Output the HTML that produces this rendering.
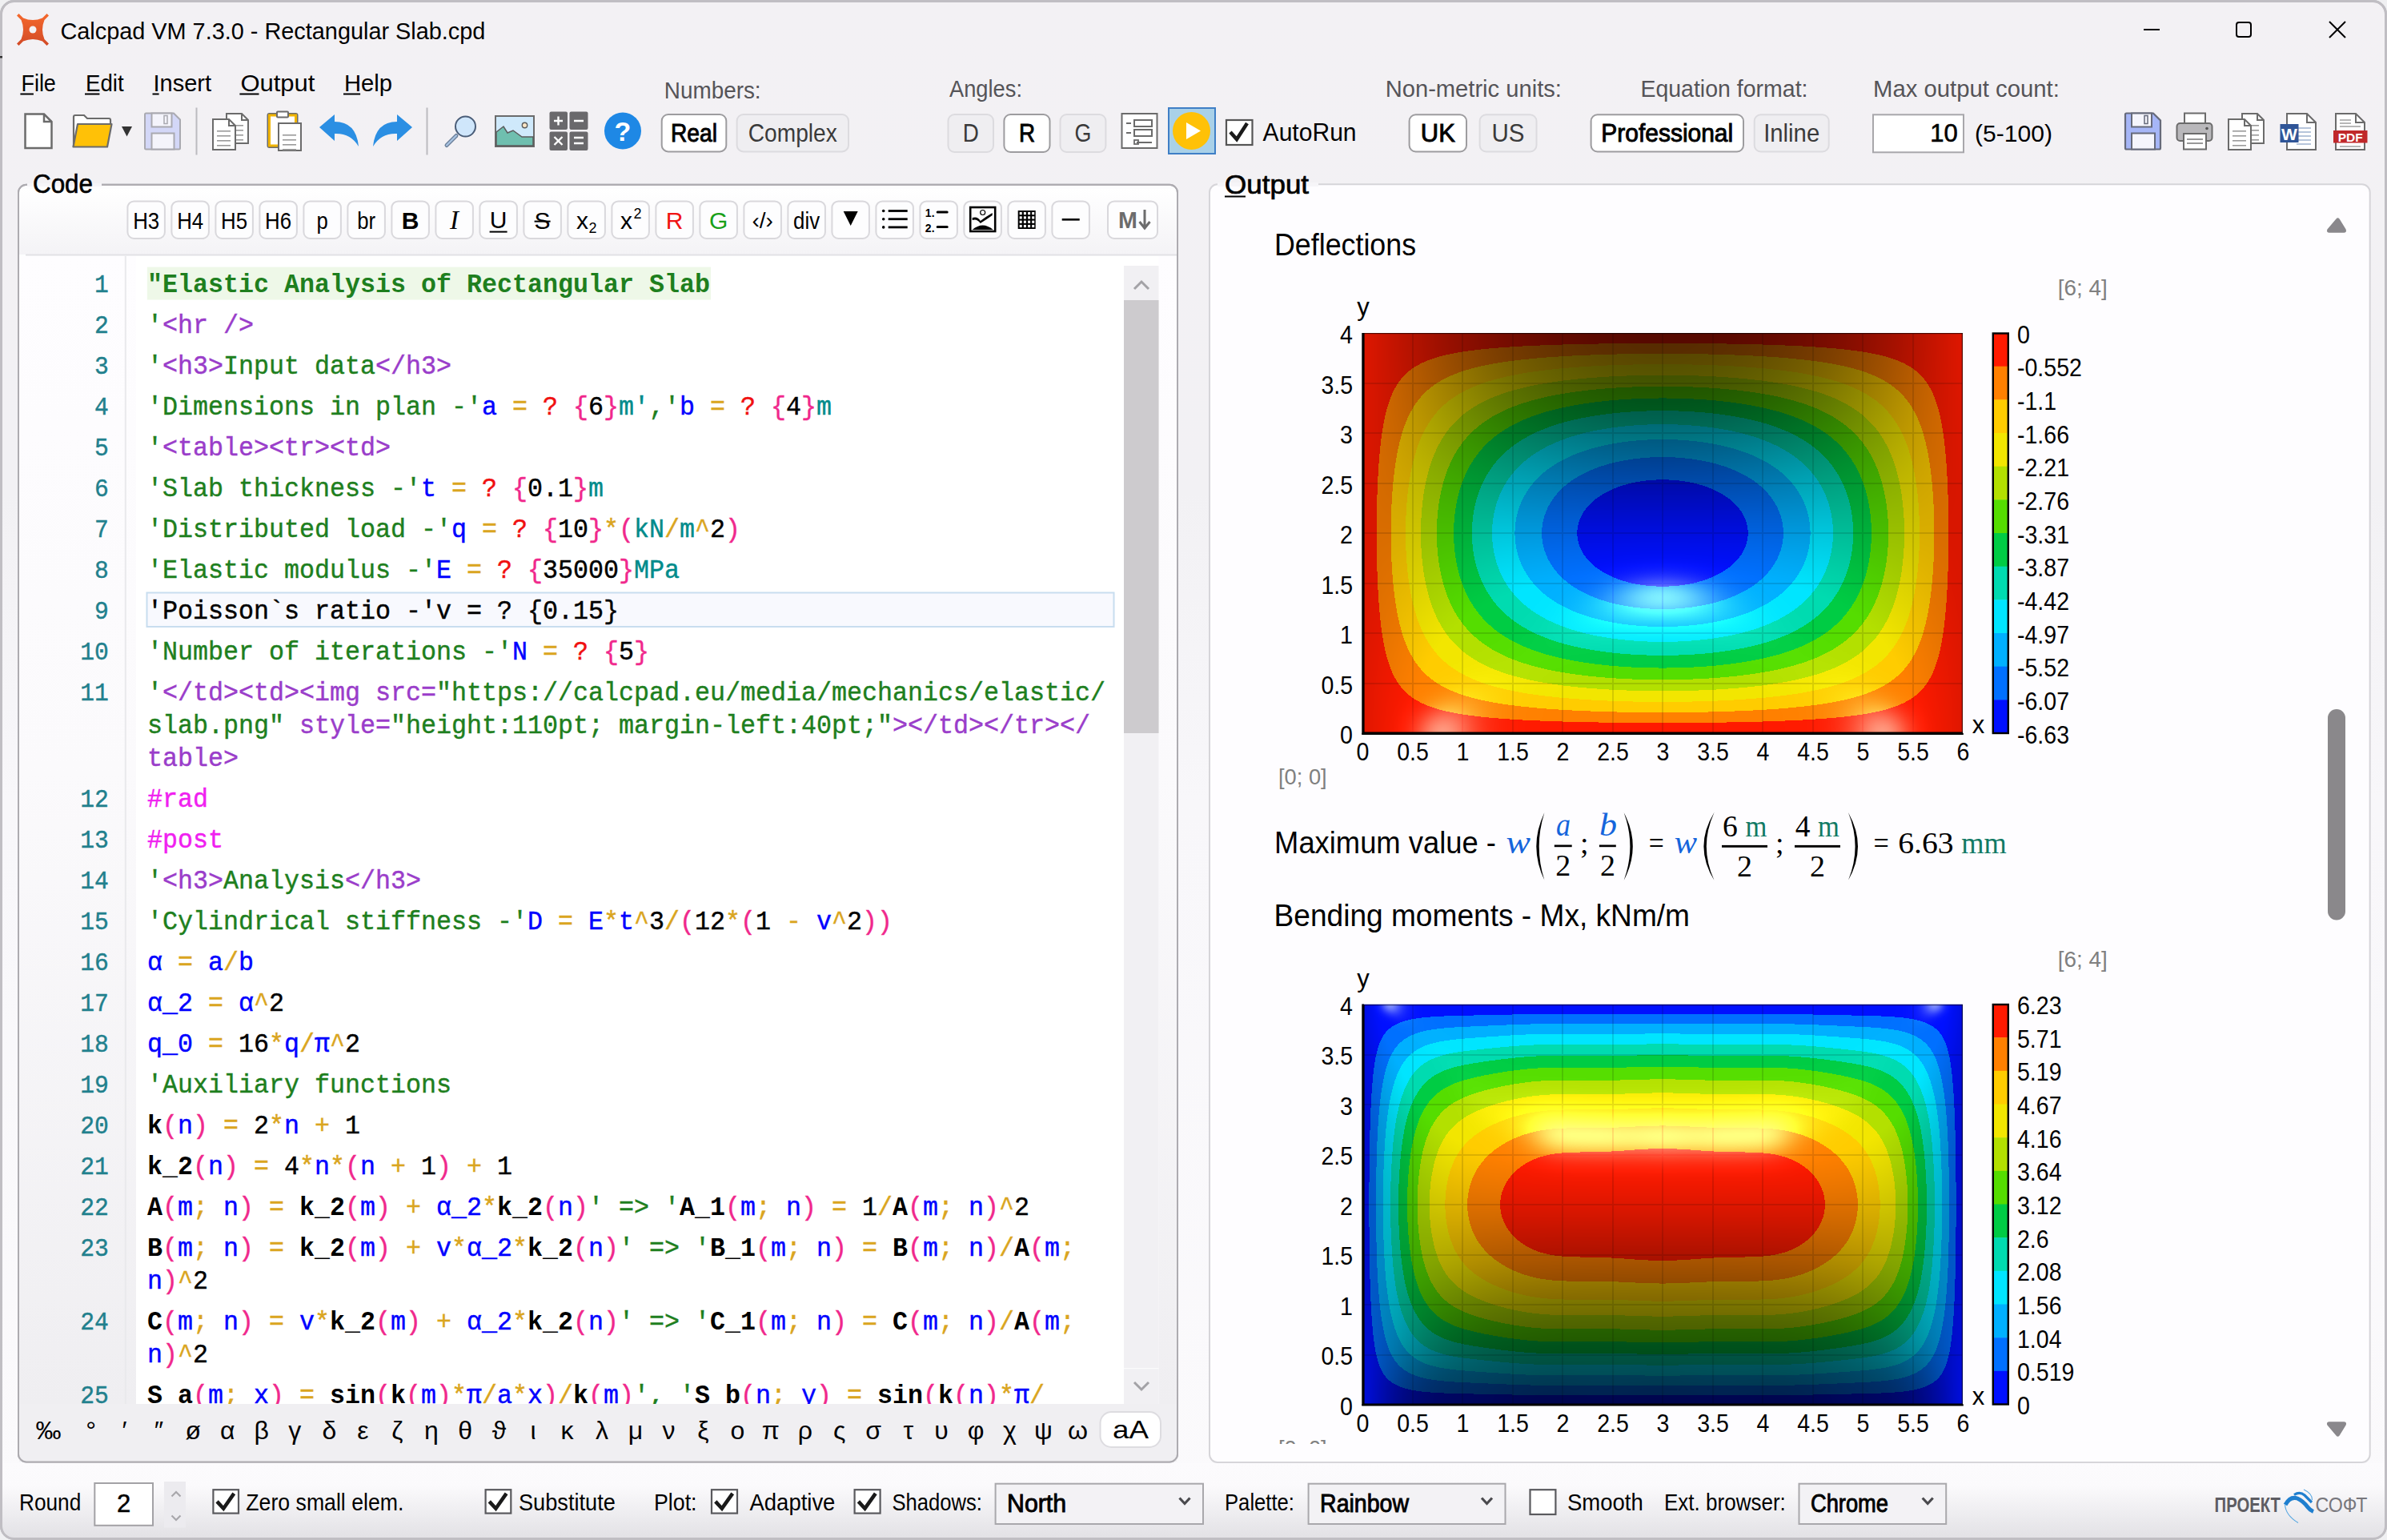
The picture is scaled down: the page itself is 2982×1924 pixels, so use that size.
<!DOCTYPE html><html><head><meta charset="utf-8"><title>Calcpad VM 7.3.0 - Rectangular Slab.cpd</title>
<style>html,body{margin:0;padding:0;background:#f0f0f2;overflow:hidden;width:2982px;height:1924px}svg{display:block;font-family:"Liberation Sans",sans-serif}text{white-space:pre}</style></head><body>
<svg width="2982" height="1924" viewBox="0 0 2982 1924">
<defs><linearGradient id="gStatus" x1="0" y1="0" x2="0" y2="1"><stop offset="0" stop-color="#fcfbfd"/><stop offset="0.3" stop-color="#fbfafc"/><stop offset="1" stop-color="#e2e1e5"/></linearGradient><linearGradient id="gCodeTb" x1="0" y1="0" x2="0" y2="1"><stop offset="0" stop-color="#ffffff"/><stop offset="1" stop-color="#f4f3f6"/></linearGradient><clipPath id="clipWin"><rect x="1" y="1" width="2980" height="1922" rx="16"/></clipPath><clipPath id="clipEditor"><rect x="24" y="320" width="1380" height="1434"/></clipPath><clipPath id="clipOut"><rect x="1513" y="232" width="1446" height="1572"/></clipPath></defs>
<defs><linearGradient id="gWin" gradientUnits="userSpaceOnUse" x1="0" y1="0" x2="0" y2="1924"><stop offset="0" stop-color="#f3f1f4"/><stop offset="0.32" stop-color="#f2f1f4"/><stop offset="0.52" stop-color="#f8f7fa"/><stop offset="1" stop-color="#fbfafc"/></linearGradient></defs>
<rect x="1.5" y="1.5" width="2979" height="1921" rx="16" fill="url(#gWin)" stroke="#c0bec3" stroke-width="3"/>
<rect x="0" y="70" width="3" height="2.5" fill="#333"/>
<g clip-path="url(#clipWin)">
<rect x="2" y="1828" width="2978" height="94" fill="url(#gStatus)"/>
<defs><linearGradient id="gSplit" x1="0" y1="0" x2="1" y2="0"><stop offset="0" stop-color="#f3f1f4"/><stop offset="0.5" stop-color="#f6f5f8"/><stop offset="1" stop-color="#f3f1f4"/></linearGradient></defs>
<rect x="1472" y="232" width="38" height="1596" fill="url(#gWin)"/>
<defs><linearGradient id="gIco" x1="0" y1="0" x2="0" y2="1"><stop offset="0" stop-color="#f5692d"/><stop offset="1" stop-color="#d24a26"/></linearGradient></defs>
<g transform="translate(41,37)"><path d="M-20,-17.5 L-17.5,-20 L-12,-14.5 Q0,-9.5 12,-14.5 L17.5,-20 L20,-17.5 L14.5,-12 Q9.5,0 14.5,12 L20,17.5 L17.5,20 L12,14.5 Q0,9.5 -12,14.5 L-17.5,20 L-20,17.5 L-14.5,12 Q-9.5,0 -14.5,-12 Z" fill="url(#gIco)"/><circle cx="0" cy="0" r="4.5" fill="#f3f1f4"/></g>
<text x="75.4" y="48.7" font-size="30" fill="#000" textLength="531.0" lengthAdjust="spacingAndGlyphs">Calcpad VM 7.3.0 - Rectangular Slab.cpd</text>
<path d="M2678,37 H2698" stroke="#000" stroke-width="2"/>
<rect x="2794" y="28" width="18" height="18" rx="3" fill="none" stroke="#000" stroke-width="2"/>
<path d="M2910,27 L2930,47 M2930,27 L2910,47" stroke="#000" stroke-width="2"/>
<text x="26.4" y="113.6" font-size="29" fill="#000" textLength="43.5" lengthAdjust="spacingAndGlyphs">File</text>
<rect x="25.4" y="116.5" width="16.5" height="2" fill="#000"/>
<text x="107.0" y="113.6" font-size="29" fill="#000" textLength="47.6" lengthAdjust="spacingAndGlyphs">Edit</text>
<rect x="106.0" y="116.5" width="18.4" height="2" fill="#000"/>
<text x="191.5" y="113.6" font-size="29" fill="#000" textLength="72.5" lengthAdjust="spacingAndGlyphs">Insert</text>
<rect x="190.5" y="116.5" width="8.1" height="2" fill="#000"/>
<text x="300.4" y="113.6" font-size="29" fill="#000" textLength="93.1" lengthAdjust="spacingAndGlyphs">Output</text>
<rect x="299.4" y="116.5" width="24.1" height="2" fill="#000"/>
<text x="430.0" y="113.6" font-size="29" fill="#000" textLength="60.1" lengthAdjust="spacingAndGlyphs">Help</text>
<rect x="429.0" y="116.5" width="21.1" height="2" fill="#000"/>
<path d="M31.5,142.5 H55 L64.5,152 V185 H31.5 Z" fill="#fff" stroke="#6b6b6b" stroke-width="2.5" stroke-linejoin="miter"/><path d="M55,142.5 V152 H64.5" fill="none" stroke="#6b6b6b" stroke-width="2.5"/>
<path d="M92,184 V146 Q92,144 94,144 H105 L109,148 H136 Q138,148 138,150 V156" fill="#fff" stroke="#6b6b6b" stroke-width="2.2"/><path d="M97,155 H139.5 L134,183.5 H91.5 Z" fill="#ffc107" stroke="#6b6b6b" stroke-width="2.2" stroke-linejoin="round"/>
<path d="M152,158 H165 L158.5,170.5 Z" fill="#333"/>
<path d="M181,143 Q181,141.5 182.5,141.5 H217 L225,149.5 V185 Q225,186.5 223.5,186.5 H182.5 Q181,186.5 181,185 Z" fill="#d3d7f7" stroke="#a9a9b0" stroke-width="2"/><rect x="189.5" y="141.5" width="25" height="17" fill="#f4f4fb" stroke="#a9a9b0" stroke-width="2"/><rect x="205" y="144.5" width="4" height="10" fill="none" stroke="#a9a9b0" stroke-width="1.5"/><rect x="189.5" y="166.5" width="28" height="20" fill="#f4f4fb" stroke="#a9a9b0" stroke-width="2"/>
<rect x="244.5" y="134.5" width="2" height="59" fill="#bcbbbf"/>
<rect x="532.5" y="134.5" width="2" height="59" fill="#bcbbbf"/>
<path d="M283,142 H302 L310,150 V179 H283 Z" fill="#fff" stroke="#6b6b6b" stroke-width="2"/><path d="M302,142 V150 H310" fill="none" stroke="#6b6b6b" stroke-width="2"/><rect x="288" y="156" width="16" height="1.6" fill="#9a9a9a"/><rect x="288" y="162" width="16" height="1.6" fill="#9a9a9a"/><rect x="288" y="168" width="16" height="1.6" fill="#9a9a9a"/><rect x="288" y="174" width="16" height="1.6" fill="#9a9a9a"/>
<path d="M266,149 H286 L294,157 V187 H266 Z" fill="#fff" stroke="#6b6b6b" stroke-width="2"/><path d="M286,149 V157 H294" fill="none" stroke="#6b6b6b" stroke-width="2"/><rect x="271" y="163" width="17" height="1.6" fill="#9a9a9a"/><rect x="271" y="169" width="17" height="1.6" fill="#9a9a9a"/><rect x="271" y="175" width="17" height="1.6" fill="#9a9a9a"/><rect x="271" y="181" width="17" height="1.6" fill="#9a9a9a"/>
<rect x="334.5" y="142" width="37" height="42" rx="2" fill="#fff" stroke="#6b6b6b" stroke-width="2"/><rect x="336.5" y="144" width="33" height="38" fill="none" stroke="#f0b400" stroke-width="3"/><rect x="346" y="139.5" width="14" height="7" rx="1" fill="#fff" stroke="#6b6b6b" stroke-width="2"/>
<path d="M348,154 H376 L376,154 V188 H348 Z" fill="#fff" stroke="#6b6b6b" stroke-width="2"/><path d="M376,154 V154 H376" fill="none" stroke="#6b6b6b" stroke-width="2"/><rect x="353" y="168" width="17" height="1.6" fill="#9a9a9a"/><rect x="353" y="174" width="17" height="1.6" fill="#9a9a9a"/><rect x="353" y="180" width="17" height="1.6" fill="#9a9a9a"/><rect x="353" y="186" width="17" height="1.6" fill="#9a9a9a"/>
<path d="M399,159 L418,143 V152 Q445,152 448,183 Q438,166 418,167 V176 Z" fill="#2b8fe3"/>
<path d="M515,159 L496,143 V152 Q469,152 466,183 Q476,166 496,167 V176 Z" fill="#2b8fe3"/>
<line x1="558" y1="181.5" x2="570" y2="169.5" stroke="#6b7f99" stroke-width="5" stroke-linecap="round"/><line x1="558" y1="181.5" x2="570" y2="169.5" stroke="#a9c4e3" stroke-width="2.2" stroke-linecap="round"/><circle cx="581.5" cy="158" r="12.5" fill="#cfe6fb" stroke="#4a5d78" stroke-width="2"/>
<rect x="619" y="145" width="48" height="38" fill="#cfe9fb" stroke="#6b6b6b" stroke-width="2"/><path d="M620,182 V165 L629,158 L634,166 L641,163 L652,171 H666 V182 Z" fill="#6fbfaf" stroke="#5b5b5b" stroke-width="1.5"/><circle cx="655.5" cy="156.5" r="3.2" fill="#fbe5c5" stroke="#5b5b5b" stroke-width="1.4"/>
<rect x="686.5" y="139.5" width="22.5" height="22.5" rx="2" fill="#6a696c"/><rect x="711.5" y="139.5" width="23" height="22.5" rx="2" fill="#6a696c"/><rect x="686.5" y="164.5" width="22.5" height="23.5" rx="2" fill="#6a696c"/><rect x="711.5" y="164.5" width="23" height="23.5" rx="2" fill="#6a696c"/><path d="M692,151 H703 M697.5,145.5 V156.5 M717,151 H729 M692.5,171 L702.5,181 M702.5,171 L692.5,181 M717,172 H729 M717,179 H729" stroke="#fff" stroke-width="2.4"/>
<circle cx="778" cy="163.6" r="23" fill="#1e88e5"/>
<text x="778.0" y="176.0" font-size="34" fill="#fff" font-weight="bold" text-anchor="middle">?</text>
<text x="829.8" y="122.8" font-size="29" fill="#555458" textLength="120.8" lengthAdjust="spacingAndGlyphs">Numbers:</text>
<text x="1186.0" y="120.5" font-size="29" fill="#555458" textLength="91.0" lengthAdjust="spacingAndGlyphs">Angles:</text>
<text x="1730.7" y="120.5" font-size="29" fill="#555458" textLength="220.2" lengthAdjust="spacingAndGlyphs">Non-metric units:</text>
<text x="2049.4" y="120.5" font-size="29" fill="#555458" textLength="209.1" lengthAdjust="spacingAndGlyphs">Equation format:</text>
<text x="2340.0" y="120.5" font-size="29" fill="#555458" textLength="232.9" lengthAdjust="spacingAndGlyphs">Max output count:</text>
<rect x="826.7" y="143.0" width="80.6" height="46.4" rx="8" fill="#ffffff" stroke="#9d9c9f" stroke-width="2"/>
<text x="838.0" y="176.8" font-size="30.5" fill="#000" textLength="58.0" lengthAdjust="spacingAndGlyphs" stroke="#000" stroke-width="0.9">Real</text>
<rect x="920.6" y="143.0" width="139.4" height="46.4" rx="8" fill="#efeef1" stroke="#dcdbdf" stroke-width="2"/>
<text x="934.8" y="176.8" font-size="30.5" fill="#3a3a3a" textLength="111.0" lengthAdjust="spacingAndGlyphs">Complex</text>
<rect x="1184.5" y="143.0" width="56.5" height="47.0" rx="8" fill="#efeef1" stroke="#dcdbdf" stroke-width="2"/>
<text x="1202.8" y="176.8" font-size="30.5" fill="#3a3a3a" textLength="20.1" lengthAdjust="spacingAndGlyphs">D</text>
<rect x="1254.4" y="143.0" width="57.1" height="47.0" rx="8" fill="#ffffff" stroke="#9d9c9f" stroke-width="2"/>
<text x="1273.0" y="176.8" font-size="30.5" fill="#000" textLength="20.1" lengthAdjust="spacingAndGlyphs" stroke="#000" stroke-width="0.9">R</text>
<rect x="1324.5" y="143.0" width="56.9" height="47.0" rx="8" fill="#efeef1" stroke="#dcdbdf" stroke-width="2"/>
<text x="1342.5" y="176.8" font-size="30.5" fill="#3a3a3a" textLength="20.9" lengthAdjust="spacingAndGlyphs">G</text>
<rect x="1760.6" y="143.3" width="71.4" height="46.2" rx="8" fill="#ffffff" stroke="#9d9c9f" stroke-width="2"/>
<text x="1774.8" y="176.8" font-size="30.5" fill="#000" textLength="43.0" lengthAdjust="spacingAndGlyphs" stroke="#000" stroke-width="0.9">UK</text>
<rect x="1848.6" y="143.3" width="70.9" height="46.2" rx="8" fill="#efeef1" stroke="#dcdbdf" stroke-width="2"/>
<text x="1863.5" y="176.8" font-size="30.5" fill="#3a3a3a" textLength="41.0" lengthAdjust="spacingAndGlyphs">US</text>
<rect x="1987.6" y="143.3" width="190.4" height="46.2" rx="8" fill="#ffffff" stroke="#9d9c9f" stroke-width="2"/>
<text x="2000.3" y="176.8" font-size="30.5" fill="#000" textLength="164.9" lengthAdjust="spacingAndGlyphs" stroke="#000" stroke-width="0.9">Professional</text>
<rect x="2191.7" y="143.3" width="93.0" height="46.2" rx="8" fill="#efeef1" stroke="#dcdbdf" stroke-width="2"/>
<text x="2203.2" y="176.8" font-size="30.5" fill="#3a3a3a" textLength="70.0" lengthAdjust="spacingAndGlyphs">Inline</text>
<rect x="1401.5" y="142" width="44" height="43" fill="#fff" stroke="#6b6b6b" stroke-width="2"/><path d="M1407,154 H1413 M1407,166 H1413 M1420,178 H1439" stroke="#6b6b6b" stroke-width="2"/><rect x="1417" y="150" width="22" height="8" fill="none" stroke="#6b6b6b" stroke-width="2"/><rect x="1417" y="162" width="22" height="8" fill="none" stroke="#6b6b6b" stroke-width="2"/><rect x="1417" y="175" width="5" height="5" fill="none" stroke="#6b6b6b" stroke-width="1.8"/>
<rect x="1460" y="135" width="58" height="57" fill="#a9d1e8" stroke="#3f7fc6" stroke-width="2"/><circle cx="1488.5" cy="163.5" r="23.5" fill="#ffc107"/><path d="M1482,153 L1500,163.5 L1482,174 Z" fill="#fff"/>
<rect x="1532" y="150" width="32.5" height="31" fill="#fff" stroke="#555" stroke-width="2.2"/><path d="M1537,165 L1545,174 L1558,154" fill="none" stroke="#1a1a1a" stroke-width="4.5" stroke-linejoin="miter"/>
<text x="1577.6" y="176.3" font-size="31" fill="#000" textLength="117.0" lengthAdjust="spacingAndGlyphs">AutoRun</text>
<rect x="2340" y="143.3" width="113" height="47" fill="#fff" stroke="#a8a7ab" stroke-width="2"/>
<text x="2445.7" y="177.0" font-size="31" fill="#000" text-anchor="end" stroke="#000" stroke-width="0.6">10</text>
<text x="2467.0" y="177.0" font-size="30" fill="#000" textLength="97.0" lengthAdjust="spacingAndGlyphs">(5-100)</text>
<path d="M2655,143 Q2655,141.5 2656.5,141.5 H2690 L2699,150.5 V185 Q2699,186.5 2697.5,186.5 H2656.5 Q2655,186.5 2655,185 Z" fill="#a6b6f7" stroke="#666a7a" stroke-width="2.2"/><rect x="2663" y="141.5" width="25" height="17" fill="#f5f5fc" stroke="#666a7a" stroke-width="2"/><rect x="2679" y="144.5" width="4" height="10" fill="none" stroke="#666a7a" stroke-width="1.5"/><rect x="2663" y="166.5" width="29" height="20" fill="#f5f5fc" stroke="#666a7a" stroke-width="2"/>
<rect x="2729" y="141.5" width="26" height="14" fill="#fff" stroke="#6b6b6b" stroke-width="2"/><rect x="2719.5" y="154" width="44" height="22" rx="4" fill="#b9b8bb" stroke="#6b6b6b" stroke-width="2"/><circle cx="2757" cy="160.5" r="1.8" fill="#555"/><rect x="2728" y="167" width="28" height="19.5" fill="#fff" stroke="#6b6b6b" stroke-width="2"/><path d="M2732,174 H2752 M2732,179 H2752" stroke="#777" stroke-width="1.6"/>
<path d="M2801,142 H2820 L2828,150 V179 H2801 Z" fill="#fff" stroke="#6b6b6b" stroke-width="2"/><path d="M2820,142 V150 H2828" fill="none" stroke="#6b6b6b" stroke-width="2"/><rect x="2806" y="156" width="16" height="1.6" fill="#9a9a9a"/><rect x="2806" y="162" width="16" height="1.6" fill="#9a9a9a"/><rect x="2806" y="168" width="16" height="1.6" fill="#9a9a9a"/><rect x="2806" y="174" width="16" height="1.6" fill="#9a9a9a"/>
<path d="M2784,149 H2804 L2812,157 V187 H2784 Z" fill="#fff" stroke="#6b6b6b" stroke-width="2"/><path d="M2804,149 V157 H2812" fill="none" stroke="#6b6b6b" stroke-width="2"/><rect x="2789" y="163" width="17" height="1.6" fill="#9a9a9a"/><rect x="2789" y="169" width="17" height="1.6" fill="#9a9a9a"/><rect x="2789" y="175" width="17" height="1.6" fill="#9a9a9a"/><rect x="2789" y="181" width="17" height="1.6" fill="#9a9a9a"/>
<path d="M2857,142 H2882 L2893,153 V187 H2857 Z" fill="#fff" stroke="#6b6b6b" stroke-width="2"/><path d="M2882,142 V153 H2893" fill="none" stroke="#6b6b6b" stroke-width="2"/>
<path d="M2869,160 H2887 M2869,165 H2887 M2869,170 H2887 M2869,175 H2887 M2869,180 H2887" stroke="#9fb3cf" stroke-width="1.6"/>
<rect x="2848.5" y="155" width="23" height="23" fill="#2f5597"/>
<text x="2860.0" y="174.5" font-size="21" fill="#fff" font-weight="bold" text-anchor="middle">W</text>
<path d="M2918,142 H2943 L2954,153 V187 H2918 Z" fill="#fff" stroke="#6b6b6b" stroke-width="2"/><path d="M2943,142 V153 H2954" fill="none" stroke="#6b6b6b" stroke-width="2"/>
<path d="M2923,150 H2937 M2923,154 H2937 M2923,158 H2949 M2923,183 H2949" stroke="#a0a0a0" stroke-width="1.6"/>
<rect x="2915" y="163" width="42.5" height="15.5" fill="#c0282a"/>
<text x="2936.2" y="176.5" font-size="15" fill="#fff" font-weight="bold" text-anchor="middle" textLength="31.0" lengthAdjust="spacingAndGlyphs">PDF</text>
<rect x="23" y="230.7" width="1448" height="1595.8" rx="10" fill="#fdfdfe" stroke="#adabb0" stroke-width="2"/>
<rect x="24" y="236" width="1445.5" height="82" fill="url(#gCodeTb)"/>
<rect x="32" y="317.5" width="1438" height="2" fill="#e2e1e5"/>
<rect x="159.4" y="251.4" width="46.5" height="46.6" rx="8" fill="#fdfdfe" stroke="#d9d8dc" stroke-width="2"/>
<text x="182.7" y="285.6" font-size="30" fill="#000" text-anchor="middle" textLength="33.0" lengthAdjust="spacingAndGlyphs">H3</text>
<rect x="214.4" y="251.4" width="46.5" height="46.6" rx="8" fill="#fdfdfe" stroke="#d9d8dc" stroke-width="2"/>
<text x="237.7" y="285.6" font-size="30" fill="#000" text-anchor="middle" textLength="33.0" lengthAdjust="spacingAndGlyphs">H4</text>
<rect x="269.4" y="251.4" width="46.5" height="46.6" rx="8" fill="#fdfdfe" stroke="#d9d8dc" stroke-width="2"/>
<text x="292.6" y="285.6" font-size="30" fill="#000" text-anchor="middle" textLength="33.0" lengthAdjust="spacingAndGlyphs">H5</text>
<rect x="324.4" y="251.4" width="46.5" height="46.6" rx="8" fill="#fdfdfe" stroke="#d9d8dc" stroke-width="2"/>
<text x="347.6" y="285.6" font-size="30" fill="#000" text-anchor="middle" textLength="33.0" lengthAdjust="spacingAndGlyphs">H6</text>
<rect x="379.4" y="251.4" width="46.5" height="46.6" rx="8" fill="#fdfdfe" stroke="#d9d8dc" stroke-width="2"/>
<text x="402.6" y="285.6" font-size="30" fill="#000" text-anchor="middle" textLength="14.3" lengthAdjust="spacingAndGlyphs">p</text>
<rect x="434.4" y="251.4" width="46.5" height="46.6" rx="8" fill="#fdfdfe" stroke="#d9d8dc" stroke-width="2"/>
<text x="457.6" y="285.6" font-size="30" fill="#000" text-anchor="middle" textLength="22.9" lengthAdjust="spacingAndGlyphs">br</text>
<rect x="489.4" y="251.4" width="46.5" height="46.6" rx="8" fill="#fdfdfe" stroke="#d9d8dc" stroke-width="2"/>
<text x="512.6" y="285.6" font-size="30" fill="#000" font-weight="bold" text-anchor="middle">B</text>
<rect x="544.4" y="251.4" width="46.5" height="46.6" rx="8" fill="#fdfdfe" stroke="#d9d8dc" stroke-width="2"/>
<text x="567.6" y="285.6" font-size="33" font-family='"Liberation Serif", serif' font-style="italic" text-anchor="middle">I</text>
<rect x="599.4" y="251.4" width="46.5" height="46.6" rx="8" fill="#fdfdfe" stroke="#d9d8dc" stroke-width="2"/>
<text x="622.6" y="284.6" font-size="30" fill="#000" text-anchor="middle">U</text>
<rect x="611.6" y="288.6" width="22" height="2" fill="#000"/>
<rect x="654.4" y="251.4" width="46.5" height="46.6" rx="8" fill="#fdfdfe" stroke="#d9d8dc" stroke-width="2"/>
<text x="677.6" y="285.6" font-size="30" fill="#000" text-anchor="middle">S</text>
<rect x="667.6" y="275.6" width="20" height="2" fill="#000"/>
<rect x="709.4" y="251.4" width="46.5" height="46.6" rx="8" fill="#fdfdfe" stroke="#d9d8dc" stroke-width="2"/>
<text x="727.6" y="285.6" font-size="30" fill="#000" text-anchor="middle">x</text>
<text x="740.6" y="290.6" font-size="18" fill="#000" text-anchor="middle">2</text>
<rect x="764.4" y="251.4" width="46.5" height="46.6" rx="8" fill="#fdfdfe" stroke="#d9d8dc" stroke-width="2"/>
<text x="782.6" y="285.6" font-size="30" fill="#000" text-anchor="middle">x</text>
<text x="796.6" y="272.6" font-size="18" fill="#000" text-anchor="middle">2</text>
<rect x="819.4" y="251.4" width="46.5" height="46.6" rx="8" fill="#fdfdfe" stroke="#d9d8dc" stroke-width="2"/>
<text x="842.6" y="285.6" font-size="30" fill="#f01414" text-anchor="middle">R</text>
<rect x="874.4" y="251.4" width="46.5" height="46.6" rx="8" fill="#fdfdfe" stroke="#d9d8dc" stroke-width="2"/>
<text x="897.6" y="285.6" font-size="30" fill="#18a018" text-anchor="middle">G</text>
<rect x="929.4" y="251.4" width="46.5" height="46.6" rx="8" fill="#fdfdfe" stroke="#d9d8dc" stroke-width="2"/>
<text x="952.6" y="284.6" font-size="28" fill="#000" text-anchor="middle">‹/›</text>
<rect x="984.4" y="251.4" width="46.5" height="46.6" rx="8" fill="#fdfdfe" stroke="#d9d8dc" stroke-width="2"/>
<text x="1007.6" y="285.6" font-size="30" fill="#000" text-anchor="middle" textLength="33.0" lengthAdjust="spacingAndGlyphs">div</text>
<rect x="1039.4" y="251.4" width="46.5" height="46.6" rx="8" fill="#fdfdfe" stroke="#d9d8dc" stroke-width="2"/>
<path d="M1053.7,264 H1071.7 L1062.7,282 Z" fill="#000"/>
<rect x="1094.4" y="251.4" width="46.5" height="46.6" rx="8" fill="#fdfdfe" stroke="#d9d8dc" stroke-width="2"/>
<circle cx="1103.7" cy="263.5" r="1.8" fill="#000"/><rect x="1109.7" y="262.1" width="24" height="2.8" fill="#000"/>
<circle cx="1103.7" cy="273.7" r="1.8" fill="#000"/><rect x="1109.7" y="272.3" width="24" height="2.8" fill="#000"/>
<circle cx="1103.7" cy="283.9" r="1.8" fill="#000"/><rect x="1109.7" y="282.5" width="24" height="2.8" fill="#000"/>
<rect x="1149.4" y="251.4" width="46.5" height="46.6" rx="8" fill="#fdfdfe" stroke="#d9d8dc" stroke-width="2"/>
<text x="1161.7" y="271.0" font-size="14" fill="#000" font-weight="bold" text-anchor="middle">1.</text>
<text x="1161.7" y="290.0" font-size="14" fill="#000" font-weight="bold" text-anchor="middle">2.</text>
<rect x="1169.7" y="263.5" width="15" height="3" rx="1.5" fill="#000"/><rect x="1169.7" y="282" width="15" height="3" rx="1.5" fill="#000"/>
<rect x="1204.4" y="251.4" width="46.5" height="46.6" rx="8" fill="#fdfdfe" stroke="#d9d8dc" stroke-width="2"/>
<rect x="1212.2" y="259" width="31" height="30" fill="#fff" stroke="#000" stroke-width="2.6"/><path d="M1214.7,272 Q1221.7,270 1224.7,276 Q1232.7,270 1239.7,266 L1239.7,269 Q1232.7,274 1224.7,279 Q1220.7,273 1214.7,275 Z" fill="#000"/><path d="M1214.7,287 Q1227.7,276 1240.7,287 Z" fill="#000"/><circle cx="1227.7" cy="265.5" r="3" fill="none" stroke="#000" stroke-width="1.2"/>
<rect x="1259.4" y="251.4" width="46.5" height="46.6" rx="8" fill="#fdfdfe" stroke="#d9d8dc" stroke-width="2"/>
<rect x="1271.7" y="263" width="22" height="23" fill="#000"/>
<rect x="1273.7" y="265.0" width="3" height="3.2" fill="#fff"/>
<rect x="1278.9" y="265.0" width="3" height="3.2" fill="#fff"/>
<rect x="1284.1" y="265.0" width="3" height="3.2" fill="#fff"/>
<rect x="1289.2" y="265.0" width="3" height="3.2" fill="#fff"/>
<rect x="1273.7" y="270.3" width="3" height="3.2" fill="#fff"/>
<rect x="1278.9" y="270.3" width="3" height="3.2" fill="#fff"/>
<rect x="1284.1" y="270.3" width="3" height="3.2" fill="#fff"/>
<rect x="1289.2" y="270.3" width="3" height="3.2" fill="#fff"/>
<rect x="1273.7" y="275.6" width="3" height="3.2" fill="#fff"/>
<rect x="1278.9" y="275.6" width="3" height="3.2" fill="#fff"/>
<rect x="1284.1" y="275.6" width="3" height="3.2" fill="#fff"/>
<rect x="1289.2" y="275.6" width="3" height="3.2" fill="#fff"/>
<rect x="1273.7" y="280.9" width="3" height="3.2" fill="#fff"/>
<rect x="1278.9" y="280.9" width="3" height="3.2" fill="#fff"/>
<rect x="1284.1" y="280.9" width="3" height="3.2" fill="#fff"/>
<rect x="1289.2" y="280.9" width="3" height="3.2" fill="#fff"/>
<rect x="1314.4" y="251.4" width="46.5" height="46.6" rx="8" fill="#fdfdfe" stroke="#d9d8dc" stroke-width="2"/>
<rect x="1326.7" y="273" width="22" height="2.6" fill="#000"/>
<rect x="1384" y="251.4" width="62" height="46.6" rx="8" fill="#fdfdfe" stroke="#d9d8dc" stroke-width="2"/>
<text x="1397.0" y="285.0" font-size="29" fill="#6c6c6c" font-weight="bold" textLength="23.9" lengthAdjust="spacingAndGlyphs">M</text>
<path d="M1430,262 V284 M1423.5,277 L1430,285 L1436.5,277" fill="none" stroke="#6c6c6c" stroke-width="3"/>
<defs><linearGradient id="gGut" x1="0" y1="0" x2="0" y2="1"><stop offset="0" stop-color="#fefdff"/><stop offset="0.45" stop-color="#fbfafc"/><stop offset="1" stop-color="#efeef1"/></linearGradient></defs>
<rect x="24" y="320" width="1446" height="1434" fill="#ffffff"/>
<rect x="24" y="320" width="146" height="1434" fill="url(#gGut)"/>
<rect x="1447.5" y="320" width="22.5" height="1434" fill="url(#gGut)"/>
<rect x="155.8" y="320" width="2" height="1434" fill="#e9e9ec"/>
<rect x="1404" y="332" width="43.5" height="1422" fill="#f1f0f3"/>
<rect x="1404" y="375" width="43.5" height="541" fill="#cdcbce"/>
<path d="M1417,361 L1426,352 L1435,361" fill="none" stroke="#a3a2a6" stroke-width="3"/>
<rect x="1404" y="1709" width="43.5" height="1.2" fill="#fbfbfc"/>
<path d="M1417,1727 L1426,1736 L1435,1727" fill="none" stroke="#a3a2a6" stroke-width="3"/>
<g clip-path="url(#clipEditor)">
<rect x="183.8" y="333.6" width="704.2" height="40.9" fill="#eef8e8"/>
<rect x="183.5" y="740.5" width="1208" height="42.5" fill="#f8f9fe" stroke="#c8ddef" stroke-width="2"/>
<text x="118.0" y="365.0" font-size="31.5" font-family='"Liberation Mono", monospace' fill="#21808d" stroke="#21808d" stroke-width="0.4" textLength="17.8" lengthAdjust="spacingAndGlyphs">1</text>
<g font-size="34" font-family='"Liberation Mono", monospace'><text x="184.0" y="365.0" fill="#1e7f1e" font-weight="bold" textLength="703.0" lengthAdjust="spacingAndGlyphs">&quot;Elastic Analysis of Rectangular Slab</text></g>
<text x="118.0" y="416.0" font-size="31.5" font-family='"Liberation Mono", monospace' fill="#21808d" stroke="#21808d" stroke-width="0.4" textLength="17.8" lengthAdjust="spacingAndGlyphs">2</text>
<g font-size="34" font-family='"Liberation Mono", monospace'><text x="184.0" y="416.0" fill="#1e7f1e" stroke="#1e7f1e" stroke-width="0.45" textLength="19.0" lengthAdjust="spacingAndGlyphs">&#x27;</text><text x="203.0" y="416.0" fill="#9a3dca" stroke="#9a3dca" stroke-width="0.45" textLength="114.0" lengthAdjust="spacingAndGlyphs">&lt;hr /&gt;</text></g>
<text x="118.0" y="467.0" font-size="31.5" font-family='"Liberation Mono", monospace' fill="#21808d" stroke="#21808d" stroke-width="0.4" textLength="17.8" lengthAdjust="spacingAndGlyphs">3</text>
<g font-size="34" font-family='"Liberation Mono", monospace'><text x="184.0" y="467.0" fill="#1e7f1e" stroke="#1e7f1e" stroke-width="0.45" textLength="19.0" lengthAdjust="spacingAndGlyphs">&#x27;</text><text x="203.0" y="467.0" fill="#9a3dca" stroke="#9a3dca" stroke-width="0.45" textLength="76.0" lengthAdjust="spacingAndGlyphs">&lt;h3&gt;</text><text x="279.0" y="467.0" fill="#1e7f1e" stroke="#1e7f1e" stroke-width="0.45" textLength="190.0" lengthAdjust="spacingAndGlyphs">Input data</text><text x="469.0" y="467.0" fill="#9a3dca" stroke="#9a3dca" stroke-width="0.45" textLength="95.0" lengthAdjust="spacingAndGlyphs">&lt;/h3&gt;</text></g>
<text x="118.0" y="518.0" font-size="31.5" font-family='"Liberation Mono", monospace' fill="#21808d" stroke="#21808d" stroke-width="0.4" textLength="17.8" lengthAdjust="spacingAndGlyphs">4</text>
<g font-size="34" font-family='"Liberation Mono", monospace'><text x="184.0" y="518.0" fill="#1e7f1e" stroke="#1e7f1e" stroke-width="0.45" textLength="418.0" lengthAdjust="spacingAndGlyphs">&#x27;Dimensions in plan -&#x27;</text><text x="602.0" y="518.0" fill="#0000ff" stroke="#0000ff" stroke-width="0.45" textLength="19.0" lengthAdjust="spacingAndGlyphs">a</text><text x="640.0" y="518.0" fill="#daa520" stroke="#daa520" stroke-width="0.45" textLength="19.0" lengthAdjust="spacingAndGlyphs">=</text><text x="678.0" y="518.0" fill="#f01010" stroke="#f01010" stroke-width="0.45" textLength="19.0" lengthAdjust="spacingAndGlyphs">?</text><text x="716.0" y="518.0" fill="#f0288c" stroke="#f0288c" stroke-width="0.45" textLength="19.0" lengthAdjust="spacingAndGlyphs">{</text><text x="735.0" y="518.0" fill="#000000" stroke="#000000" stroke-width="0.45" textLength="19.0" lengthAdjust="spacingAndGlyphs">6</text><text x="754.0" y="518.0" fill="#f0288c" stroke="#f0288c" stroke-width="0.45" textLength="19.0" lengthAdjust="spacingAndGlyphs">}</text><text x="773.0" y="518.0" fill="#008b8b" stroke="#008b8b" stroke-width="0.45" textLength="38.0" lengthAdjust="spacingAndGlyphs">m&#x27;</text><text x="811.0" y="518.0" fill="#1e7f1e" stroke="#1e7f1e" stroke-width="0.45" textLength="38.0" lengthAdjust="spacingAndGlyphs">,&#x27;</text><text x="849.0" y="518.0" fill="#0000ff" stroke="#0000ff" stroke-width="0.45" textLength="19.0" lengthAdjust="spacingAndGlyphs">b</text><text x="887.0" y="518.0" fill="#daa520" stroke="#daa520" stroke-width="0.45" textLength="19.0" lengthAdjust="spacingAndGlyphs">=</text><text x="925.0" y="518.0" fill="#f01010" stroke="#f01010" stroke-width="0.45" textLength="19.0" lengthAdjust="spacingAndGlyphs">?</text><text x="963.0" y="518.0" fill="#f0288c" stroke="#f0288c" stroke-width="0.45" textLength="19.0" lengthAdjust="spacingAndGlyphs">{</text><text x="982.0" y="518.0" fill="#000000" stroke="#000000" stroke-width="0.45" textLength="19.0" lengthAdjust="spacingAndGlyphs">4</text><text x="1001.0" y="518.0" fill="#f0288c" stroke="#f0288c" stroke-width="0.45" textLength="19.0" lengthAdjust="spacingAndGlyphs">}</text><text x="1020.0" y="518.0" fill="#008b8b" stroke="#008b8b" stroke-width="0.45" textLength="19.0" lengthAdjust="spacingAndGlyphs">m</text></g>
<text x="118.0" y="569.0" font-size="31.5" font-family='"Liberation Mono", monospace' fill="#21808d" stroke="#21808d" stroke-width="0.4" textLength="17.8" lengthAdjust="spacingAndGlyphs">5</text>
<g font-size="34" font-family='"Liberation Mono", monospace'><text x="184.0" y="569.0" fill="#1e7f1e" stroke="#1e7f1e" stroke-width="0.45" textLength="19.0" lengthAdjust="spacingAndGlyphs">&#x27;</text><text x="203.0" y="569.0" fill="#9a3dca" stroke="#9a3dca" stroke-width="0.45" textLength="285.0" lengthAdjust="spacingAndGlyphs">&lt;table&gt;&lt;tr&gt;&lt;td&gt;</text></g>
<text x="118.0" y="620.0" font-size="31.5" font-family='"Liberation Mono", monospace' fill="#21808d" stroke="#21808d" stroke-width="0.4" textLength="17.8" lengthAdjust="spacingAndGlyphs">6</text>
<g font-size="34" font-family='"Liberation Mono", monospace'><text x="184.0" y="620.0" fill="#1e7f1e" stroke="#1e7f1e" stroke-width="0.45" textLength="342.0" lengthAdjust="spacingAndGlyphs">&#x27;Slab thickness -&#x27;</text><text x="526.0" y="620.0" fill="#0000ff" stroke="#0000ff" stroke-width="0.45" textLength="19.0" lengthAdjust="spacingAndGlyphs">t</text><text x="564.0" y="620.0" fill="#daa520" stroke="#daa520" stroke-width="0.45" textLength="19.0" lengthAdjust="spacingAndGlyphs">=</text><text x="602.0" y="620.0" fill="#f01010" stroke="#f01010" stroke-width="0.45" textLength="19.0" lengthAdjust="spacingAndGlyphs">?</text><text x="640.0" y="620.0" fill="#f0288c" stroke="#f0288c" stroke-width="0.45" textLength="19.0" lengthAdjust="spacingAndGlyphs">{</text><text x="659.0" y="620.0" fill="#000000" stroke="#000000" stroke-width="0.45" textLength="57.0" lengthAdjust="spacingAndGlyphs">0.1</text><text x="716.0" y="620.0" fill="#f0288c" stroke="#f0288c" stroke-width="0.45" textLength="19.0" lengthAdjust="spacingAndGlyphs">}</text><text x="735.0" y="620.0" fill="#008b8b" stroke="#008b8b" stroke-width="0.45" textLength="19.0" lengthAdjust="spacingAndGlyphs">m</text></g>
<text x="118.0" y="671.0" font-size="31.5" font-family='"Liberation Mono", monospace' fill="#21808d" stroke="#21808d" stroke-width="0.4" textLength="17.8" lengthAdjust="spacingAndGlyphs">7</text>
<g font-size="34" font-family='"Liberation Mono", monospace'><text x="184.0" y="671.0" fill="#1e7f1e" stroke="#1e7f1e" stroke-width="0.45" textLength="380.0" lengthAdjust="spacingAndGlyphs">&#x27;Distributed load -&#x27;</text><text x="564.0" y="671.0" fill="#0000ff" stroke="#0000ff" stroke-width="0.45" textLength="19.0" lengthAdjust="spacingAndGlyphs">q</text><text x="602.0" y="671.0" fill="#daa520" stroke="#daa520" stroke-width="0.45" textLength="19.0" lengthAdjust="spacingAndGlyphs">=</text><text x="640.0" y="671.0" fill="#f01010" stroke="#f01010" stroke-width="0.45" textLength="19.0" lengthAdjust="spacingAndGlyphs">?</text><text x="678.0" y="671.0" fill="#f0288c" stroke="#f0288c" stroke-width="0.45" textLength="19.0" lengthAdjust="spacingAndGlyphs">{</text><text x="697.0" y="671.0" fill="#000000" stroke="#000000" stroke-width="0.45" textLength="38.0" lengthAdjust="spacingAndGlyphs">10</text><text x="735.0" y="671.0" fill="#f0288c" stroke="#f0288c" stroke-width="0.45" textLength="19.0" lengthAdjust="spacingAndGlyphs">}</text><text x="754.0" y="671.0" fill="#daa520" stroke="#daa520" stroke-width="0.45" textLength="19.0" lengthAdjust="spacingAndGlyphs">*</text><text x="773.0" y="671.0" fill="#f0288c" stroke="#f0288c" stroke-width="0.45" textLength="19.0" lengthAdjust="spacingAndGlyphs">(</text><text x="792.0" y="671.0" fill="#008b8b" stroke="#008b8b" stroke-width="0.45" textLength="38.0" lengthAdjust="spacingAndGlyphs">kN</text><text x="830.0" y="671.0" fill="#daa520" stroke="#daa520" stroke-width="0.45" textLength="19.0" lengthAdjust="spacingAndGlyphs">/</text><text x="849.0" y="671.0" fill="#008b8b" stroke="#008b8b" stroke-width="0.45" textLength="19.0" lengthAdjust="spacingAndGlyphs">m</text><text x="868.0" y="671.0" fill="#daa520" stroke="#daa520" stroke-width="0.45" textLength="19.0" lengthAdjust="spacingAndGlyphs">^</text><text x="887.0" y="671.0" fill="#000000" stroke="#000000" stroke-width="0.45" textLength="19.0" lengthAdjust="spacingAndGlyphs">2</text><text x="906.0" y="671.0" fill="#f0288c" stroke="#f0288c" stroke-width="0.45" textLength="19.0" lengthAdjust="spacingAndGlyphs">)</text></g>
<text x="118.0" y="722.0" font-size="31.5" font-family='"Liberation Mono", monospace' fill="#21808d" stroke="#21808d" stroke-width="0.4" textLength="17.8" lengthAdjust="spacingAndGlyphs">8</text>
<g font-size="34" font-family='"Liberation Mono", monospace'><text x="184.0" y="722.0" fill="#1e7f1e" stroke="#1e7f1e" stroke-width="0.45" textLength="361.0" lengthAdjust="spacingAndGlyphs">&#x27;Elastic modulus -&#x27;</text><text x="545.0" y="722.0" fill="#0000ff" stroke="#0000ff" stroke-width="0.45" textLength="19.0" lengthAdjust="spacingAndGlyphs">E</text><text x="583.0" y="722.0" fill="#daa520" stroke="#daa520" stroke-width="0.45" textLength="19.0" lengthAdjust="spacingAndGlyphs">=</text><text x="621.0" y="722.0" fill="#f01010" stroke="#f01010" stroke-width="0.45" textLength="19.0" lengthAdjust="spacingAndGlyphs">?</text><text x="659.0" y="722.0" fill="#f0288c" stroke="#f0288c" stroke-width="0.45" textLength="19.0" lengthAdjust="spacingAndGlyphs">{</text><text x="678.0" y="722.0" fill="#000000" stroke="#000000" stroke-width="0.45" textLength="95.0" lengthAdjust="spacingAndGlyphs">35000</text><text x="773.0" y="722.0" fill="#f0288c" stroke="#f0288c" stroke-width="0.45" textLength="19.0" lengthAdjust="spacingAndGlyphs">}</text><text x="792.0" y="722.0" fill="#008b8b" stroke="#008b8b" stroke-width="0.45" textLength="57.0" lengthAdjust="spacingAndGlyphs">MPa</text></g>
<text x="118.0" y="773.0" font-size="31.5" font-family='"Liberation Mono", monospace' fill="#21808d" stroke="#21808d" stroke-width="0.4" textLength="17.8" lengthAdjust="spacingAndGlyphs">9</text>
<g font-size="34" font-family='"Liberation Mono", monospace'><text x="184.0" y="773.0" fill="#000000" stroke="#000000" stroke-width="0.45" textLength="589.0" lengthAdjust="spacingAndGlyphs">&#x27;Poisson`s ratio -&#x27;v = ? {0.15}</text></g>
<text x="100.2" y="824.0" font-size="31.5" font-family='"Liberation Mono", monospace' fill="#21808d" stroke="#21808d" stroke-width="0.4" textLength="35.6" lengthAdjust="spacingAndGlyphs">10</text>
<g font-size="34" font-family='"Liberation Mono", monospace'><text x="184.0" y="824.0" fill="#1e7f1e" stroke="#1e7f1e" stroke-width="0.45" textLength="456.0" lengthAdjust="spacingAndGlyphs">&#x27;Number of iterations -&#x27;</text><text x="640.0" y="824.0" fill="#0000ff" stroke="#0000ff" stroke-width="0.45" textLength="19.0" lengthAdjust="spacingAndGlyphs">N</text><text x="678.0" y="824.0" fill="#daa520" stroke="#daa520" stroke-width="0.45" textLength="19.0" lengthAdjust="spacingAndGlyphs">=</text><text x="716.0" y="824.0" fill="#f01010" stroke="#f01010" stroke-width="0.45" textLength="19.0" lengthAdjust="spacingAndGlyphs">?</text><text x="754.0" y="824.0" fill="#f0288c" stroke="#f0288c" stroke-width="0.45" textLength="19.0" lengthAdjust="spacingAndGlyphs">{</text><text x="773.0" y="824.0" fill="#000000" stroke="#000000" stroke-width="0.45" textLength="19.0" lengthAdjust="spacingAndGlyphs">5</text><text x="792.0" y="824.0" fill="#f0288c" stroke="#f0288c" stroke-width="0.45" textLength="19.0" lengthAdjust="spacingAndGlyphs">}</text></g>
<text x="100.2" y="875.0" font-size="31.5" font-family='"Liberation Mono", monospace' fill="#21808d" stroke="#21808d" stroke-width="0.4" textLength="35.6" lengthAdjust="spacingAndGlyphs">11</text>
<g font-size="34" font-family='"Liberation Mono", monospace'><text x="184.0" y="875.0" fill="#1e7f1e" stroke="#1e7f1e" stroke-width="0.45" textLength="19.0" lengthAdjust="spacingAndGlyphs">&#x27;</text><text x="203.0" y="875.0" fill="#9a3dca" stroke="#9a3dca" stroke-width="0.45" textLength="342.0" lengthAdjust="spacingAndGlyphs">&lt;/td&gt;&lt;td&gt;&lt;img src=</text><text x="545.0" y="875.0" fill="#1e7f1e" stroke="#1e7f1e" stroke-width="0.45" textLength="133.0" lengthAdjust="spacingAndGlyphs">&quot;https:</text><text x="678.0" y="875.0" fill="#1e7f1e" stroke="#1e7f1e" stroke-width="0.45" textLength="703.0" lengthAdjust="spacingAndGlyphs">//calcpad.eu/media/mechanics/elastic/</text></g>
<g font-size="34" font-family='"Liberation Mono", monospace'><text x="184.0" y="916.0" fill="#1e7f1e" stroke="#1e7f1e" stroke-width="0.45" textLength="171.0" lengthAdjust="spacingAndGlyphs">slab.png&quot;</text><text x="355.0" y="916.0" fill="#9a3dca" stroke="#9a3dca" stroke-width="0.45" textLength="133.0" lengthAdjust="spacingAndGlyphs"> style=</text><text x="488.0" y="916.0" fill="#1e7f1e" stroke="#1e7f1e" stroke-width="0.45" textLength="627.0" lengthAdjust="spacingAndGlyphs">&quot;height:110pt; margin-left:40pt;&quot;</text><text x="1115.0" y="916.0" fill="#9a3dca" stroke="#9a3dca" stroke-width="0.45" textLength="247.0" lengthAdjust="spacingAndGlyphs">&gt;&lt;/td&gt;&lt;/tr&gt;&lt;/</text></g>
<g font-size="34" font-family='"Liberation Mono", monospace'><text x="184.0" y="957.0" fill="#9a3dca" stroke="#9a3dca" stroke-width="0.45" textLength="114.0" lengthAdjust="spacingAndGlyphs">table&gt;</text></g>
<text x="100.2" y="1008.0" font-size="31.5" font-family='"Liberation Mono", monospace' fill="#21808d" stroke="#21808d" stroke-width="0.4" textLength="35.6" lengthAdjust="spacingAndGlyphs">12</text>
<g font-size="34" font-family='"Liberation Mono", monospace'><text x="184.0" y="1008.0" fill="#f020f0" stroke="#f020f0" stroke-width="0.45" textLength="76.0" lengthAdjust="spacingAndGlyphs">#rad</text></g>
<text x="100.2" y="1059.0" font-size="31.5" font-family='"Liberation Mono", monospace' fill="#21808d" stroke="#21808d" stroke-width="0.4" textLength="35.6" lengthAdjust="spacingAndGlyphs">13</text>
<g font-size="34" font-family='"Liberation Mono", monospace'><text x="184.0" y="1059.0" fill="#f020f0" stroke="#f020f0" stroke-width="0.45" textLength="95.0" lengthAdjust="spacingAndGlyphs">#post</text></g>
<text x="100.2" y="1110.0" font-size="31.5" font-family='"Liberation Mono", monospace' fill="#21808d" stroke="#21808d" stroke-width="0.4" textLength="35.6" lengthAdjust="spacingAndGlyphs">14</text>
<g font-size="34" font-family='"Liberation Mono", monospace'><text x="184.0" y="1110.0" fill="#1e7f1e" stroke="#1e7f1e" stroke-width="0.45" textLength="19.0" lengthAdjust="spacingAndGlyphs">&#x27;</text><text x="203.0" y="1110.0" fill="#9a3dca" stroke="#9a3dca" stroke-width="0.45" textLength="76.0" lengthAdjust="spacingAndGlyphs">&lt;h3&gt;</text><text x="279.0" y="1110.0" fill="#1e7f1e" stroke="#1e7f1e" stroke-width="0.45" textLength="152.0" lengthAdjust="spacingAndGlyphs">Analysis</text><text x="431.0" y="1110.0" fill="#9a3dca" stroke="#9a3dca" stroke-width="0.45" textLength="95.0" lengthAdjust="spacingAndGlyphs">&lt;/h3&gt;</text></g>
<text x="100.2" y="1161.0" font-size="31.5" font-family='"Liberation Mono", monospace' fill="#21808d" stroke="#21808d" stroke-width="0.4" textLength="35.6" lengthAdjust="spacingAndGlyphs">15</text>
<g font-size="34" font-family='"Liberation Mono", monospace'><text x="184.0" y="1161.0" fill="#1e7f1e" stroke="#1e7f1e" stroke-width="0.45" textLength="475.0" lengthAdjust="spacingAndGlyphs">&#x27;Cylindrical stiffness -&#x27;</text><text x="659.0" y="1161.0" fill="#0000ff" stroke="#0000ff" stroke-width="0.45" textLength="19.0" lengthAdjust="spacingAndGlyphs">D</text><text x="697.0" y="1161.0" fill="#daa520" stroke="#daa520" stroke-width="0.45" textLength="19.0" lengthAdjust="spacingAndGlyphs">=</text><text x="735.0" y="1161.0" fill="#0000ff" stroke="#0000ff" stroke-width="0.45" textLength="19.0" lengthAdjust="spacingAndGlyphs">E</text><text x="754.0" y="1161.0" fill="#daa520" stroke="#daa520" stroke-width="0.45" textLength="19.0" lengthAdjust="spacingAndGlyphs">*</text><text x="773.0" y="1161.0" fill="#0000ff" stroke="#0000ff" stroke-width="0.45" textLength="19.0" lengthAdjust="spacingAndGlyphs">t</text><text x="792.0" y="1161.0" fill="#daa520" stroke="#daa520" stroke-width="0.45" textLength="19.0" lengthAdjust="spacingAndGlyphs">^</text><text x="811.0" y="1161.0" fill="#000000" stroke="#000000" stroke-width="0.45" textLength="19.0" lengthAdjust="spacingAndGlyphs">3</text><text x="830.0" y="1161.0" fill="#daa520" stroke="#daa520" stroke-width="0.45" textLength="19.0" lengthAdjust="spacingAndGlyphs">/</text><text x="849.0" y="1161.0" fill="#f0288c" stroke="#f0288c" stroke-width="0.45" textLength="19.0" lengthAdjust="spacingAndGlyphs">(</text><text x="868.0" y="1161.0" fill="#000000" stroke="#000000" stroke-width="0.45" textLength="38.0" lengthAdjust="spacingAndGlyphs">12</text><text x="906.0" y="1161.0" fill="#daa520" stroke="#daa520" stroke-width="0.45" textLength="19.0" lengthAdjust="spacingAndGlyphs">*</text><text x="925.0" y="1161.0" fill="#f0288c" stroke="#f0288c" stroke-width="0.45" textLength="19.0" lengthAdjust="spacingAndGlyphs">(</text><text x="944.0" y="1161.0" fill="#000000" stroke="#000000" stroke-width="0.45" textLength="19.0" lengthAdjust="spacingAndGlyphs">1</text><text x="982.0" y="1161.0" fill="#daa520" stroke="#daa520" stroke-width="0.45" textLength="19.0" lengthAdjust="spacingAndGlyphs">-</text><text x="1020.0" y="1161.0" fill="#0000ff" stroke="#0000ff" stroke-width="0.45" textLength="19.0" lengthAdjust="spacingAndGlyphs">v</text><text x="1039.0" y="1161.0" fill="#daa520" stroke="#daa520" stroke-width="0.45" textLength="19.0" lengthAdjust="spacingAndGlyphs">^</text><text x="1058.0" y="1161.0" fill="#000000" stroke="#000000" stroke-width="0.45" textLength="19.0" lengthAdjust="spacingAndGlyphs">2</text><text x="1077.0" y="1161.0" fill="#f0288c" stroke="#f0288c" stroke-width="0.45" textLength="19.0" lengthAdjust="spacingAndGlyphs">)</text><text x="1096.0" y="1161.0" fill="#f0288c" stroke="#f0288c" stroke-width="0.45" textLength="19.0" lengthAdjust="spacingAndGlyphs">)</text></g>
<text x="100.2" y="1212.0" font-size="31.5" font-family='"Liberation Mono", monospace' fill="#21808d" stroke="#21808d" stroke-width="0.4" textLength="35.6" lengthAdjust="spacingAndGlyphs">16</text>
<g font-size="34" font-family='"Liberation Mono", monospace'><text x="184.0" y="1212.0" fill="#0000ff" stroke="#0000ff" stroke-width="0.45" textLength="19.0" lengthAdjust="spacingAndGlyphs">α</text><text x="222.0" y="1212.0" fill="#daa520" stroke="#daa520" stroke-width="0.45" textLength="19.0" lengthAdjust="spacingAndGlyphs">=</text><text x="260.0" y="1212.0" fill="#0000ff" stroke="#0000ff" stroke-width="0.45" textLength="19.0" lengthAdjust="spacingAndGlyphs">a</text><text x="279.0" y="1212.0" fill="#daa520" stroke="#daa520" stroke-width="0.45" textLength="19.0" lengthAdjust="spacingAndGlyphs">/</text><text x="298.0" y="1212.0" fill="#0000ff" stroke="#0000ff" stroke-width="0.45" textLength="19.0" lengthAdjust="spacingAndGlyphs">b</text></g>
<text x="100.2" y="1263.0" font-size="31.5" font-family='"Liberation Mono", monospace' fill="#21808d" stroke="#21808d" stroke-width="0.4" textLength="35.6" lengthAdjust="spacingAndGlyphs">17</text>
<g font-size="34" font-family='"Liberation Mono", monospace'><text x="184.0" y="1263.0" fill="#0000ff" stroke="#0000ff" stroke-width="0.45" textLength="57.0" lengthAdjust="spacingAndGlyphs">α_2</text><text x="260.0" y="1263.0" fill="#daa520" stroke="#daa520" stroke-width="0.45" textLength="19.0" lengthAdjust="spacingAndGlyphs">=</text><text x="298.0" y="1263.0" fill="#0000ff" stroke="#0000ff" stroke-width="0.45" textLength="19.0" lengthAdjust="spacingAndGlyphs">α</text><text x="317.0" y="1263.0" fill="#daa520" stroke="#daa520" stroke-width="0.45" textLength="19.0" lengthAdjust="spacingAndGlyphs">^</text><text x="336.0" y="1263.0" fill="#000000" stroke="#000000" stroke-width="0.45" textLength="19.0" lengthAdjust="spacingAndGlyphs">2</text></g>
<text x="100.2" y="1314.0" font-size="31.5" font-family='"Liberation Mono", monospace' fill="#21808d" stroke="#21808d" stroke-width="0.4" textLength="35.6" lengthAdjust="spacingAndGlyphs">18</text>
<g font-size="34" font-family='"Liberation Mono", monospace'><text x="184.0" y="1314.0" fill="#0000ff" stroke="#0000ff" stroke-width="0.45" textLength="57.0" lengthAdjust="spacingAndGlyphs">q_0</text><text x="260.0" y="1314.0" fill="#daa520" stroke="#daa520" stroke-width="0.45" textLength="19.0" lengthAdjust="spacingAndGlyphs">=</text><text x="298.0" y="1314.0" fill="#000000" stroke="#000000" stroke-width="0.45" textLength="38.0" lengthAdjust="spacingAndGlyphs">16</text><text x="336.0" y="1314.0" fill="#daa520" stroke="#daa520" stroke-width="0.45" textLength="19.0" lengthAdjust="spacingAndGlyphs">*</text><text x="355.0" y="1314.0" fill="#0000ff" stroke="#0000ff" stroke-width="0.45" textLength="19.0" lengthAdjust="spacingAndGlyphs">q</text><text x="374.0" y="1314.0" fill="#daa520" stroke="#daa520" stroke-width="0.45" textLength="19.0" lengthAdjust="spacingAndGlyphs">/</text><text x="393.0" y="1314.0" fill="#0000ff" stroke="#0000ff" stroke-width="0.45" textLength="19.0" lengthAdjust="spacingAndGlyphs">π</text><text x="412.0" y="1314.0" fill="#daa520" stroke="#daa520" stroke-width="0.45" textLength="19.0" lengthAdjust="spacingAndGlyphs">^</text><text x="431.0" y="1314.0" fill="#000000" stroke="#000000" stroke-width="0.45" textLength="19.0" lengthAdjust="spacingAndGlyphs">2</text></g>
<text x="100.2" y="1365.0" font-size="31.5" font-family='"Liberation Mono", monospace' fill="#21808d" stroke="#21808d" stroke-width="0.4" textLength="35.6" lengthAdjust="spacingAndGlyphs">19</text>
<g font-size="34" font-family='"Liberation Mono", monospace'><text x="184.0" y="1365.0" fill="#1e7f1e" stroke="#1e7f1e" stroke-width="0.45" textLength="380.0" lengthAdjust="spacingAndGlyphs">&#x27;Auxiliary functions</text></g>
<text x="100.2" y="1416.0" font-size="31.5" font-family='"Liberation Mono", monospace' fill="#21808d" stroke="#21808d" stroke-width="0.4" textLength="35.6" lengthAdjust="spacingAndGlyphs">20</text>
<g font-size="34" font-family='"Liberation Mono", monospace'><text x="184.0" y="1416.0" fill="#000000" font-weight="bold" textLength="19.0" lengthAdjust="spacingAndGlyphs">k</text><text x="203.0" y="1416.0" fill="#f0288c" stroke="#f0288c" stroke-width="0.45" textLength="19.0" lengthAdjust="spacingAndGlyphs">(</text><text x="222.0" y="1416.0" fill="#0000ff" stroke="#0000ff" stroke-width="0.45" textLength="19.0" lengthAdjust="spacingAndGlyphs">n</text><text x="241.0" y="1416.0" fill="#f0288c" stroke="#f0288c" stroke-width="0.45" textLength="19.0" lengthAdjust="spacingAndGlyphs">)</text><text x="279.0" y="1416.0" fill="#daa520" stroke="#daa520" stroke-width="0.45" textLength="19.0" lengthAdjust="spacingAndGlyphs">=</text><text x="317.0" y="1416.0" fill="#000000" stroke="#000000" stroke-width="0.45" textLength="19.0" lengthAdjust="spacingAndGlyphs">2</text><text x="336.0" y="1416.0" fill="#daa520" stroke="#daa520" stroke-width="0.45" textLength="19.0" lengthAdjust="spacingAndGlyphs">*</text><text x="355.0" y="1416.0" fill="#0000ff" stroke="#0000ff" stroke-width="0.45" textLength="19.0" lengthAdjust="spacingAndGlyphs">n</text><text x="393.0" y="1416.0" fill="#daa520" stroke="#daa520" stroke-width="0.45" textLength="19.0" lengthAdjust="spacingAndGlyphs">+</text><text x="431.0" y="1416.0" fill="#000000" stroke="#000000" stroke-width="0.45" textLength="19.0" lengthAdjust="spacingAndGlyphs">1</text></g>
<text x="100.2" y="1467.0" font-size="31.5" font-family='"Liberation Mono", monospace' fill="#21808d" stroke="#21808d" stroke-width="0.4" textLength="35.6" lengthAdjust="spacingAndGlyphs">21</text>
<g font-size="34" font-family='"Liberation Mono", monospace'><text x="184.0" y="1467.0" fill="#000000" font-weight="bold" textLength="57.0" lengthAdjust="spacingAndGlyphs">k_2</text><text x="241.0" y="1467.0" fill="#f0288c" stroke="#f0288c" stroke-width="0.45" textLength="19.0" lengthAdjust="spacingAndGlyphs">(</text><text x="260.0" y="1467.0" fill="#0000ff" stroke="#0000ff" stroke-width="0.45" textLength="19.0" lengthAdjust="spacingAndGlyphs">n</text><text x="279.0" y="1467.0" fill="#f0288c" stroke="#f0288c" stroke-width="0.45" textLength="19.0" lengthAdjust="spacingAndGlyphs">)</text><text x="317.0" y="1467.0" fill="#daa520" stroke="#daa520" stroke-width="0.45" textLength="19.0" lengthAdjust="spacingAndGlyphs">=</text><text x="355.0" y="1467.0" fill="#000000" stroke="#000000" stroke-width="0.45" textLength="19.0" lengthAdjust="spacingAndGlyphs">4</text><text x="374.0" y="1467.0" fill="#daa520" stroke="#daa520" stroke-width="0.45" textLength="19.0" lengthAdjust="spacingAndGlyphs">*</text><text x="393.0" y="1467.0" fill="#0000ff" stroke="#0000ff" stroke-width="0.45" textLength="19.0" lengthAdjust="spacingAndGlyphs">n</text><text x="412.0" y="1467.0" fill="#daa520" stroke="#daa520" stroke-width="0.45" textLength="19.0" lengthAdjust="spacingAndGlyphs">*</text><text x="431.0" y="1467.0" fill="#f0288c" stroke="#f0288c" stroke-width="0.45" textLength="19.0" lengthAdjust="spacingAndGlyphs">(</text><text x="450.0" y="1467.0" fill="#0000ff" stroke="#0000ff" stroke-width="0.45" textLength="19.0" lengthAdjust="spacingAndGlyphs">n</text><text x="488.0" y="1467.0" fill="#daa520" stroke="#daa520" stroke-width="0.45" textLength="19.0" lengthAdjust="spacingAndGlyphs">+</text><text x="526.0" y="1467.0" fill="#000000" stroke="#000000" stroke-width="0.45" textLength="19.0" lengthAdjust="spacingAndGlyphs">1</text><text x="545.0" y="1467.0" fill="#f0288c" stroke="#f0288c" stroke-width="0.45" textLength="19.0" lengthAdjust="spacingAndGlyphs">)</text><text x="583.0" y="1467.0" fill="#daa520" stroke="#daa520" stroke-width="0.45" textLength="19.0" lengthAdjust="spacingAndGlyphs">+</text><text x="621.0" y="1467.0" fill="#000000" stroke="#000000" stroke-width="0.45" textLength="19.0" lengthAdjust="spacingAndGlyphs">1</text></g>
<text x="100.2" y="1518.0" font-size="31.5" font-family='"Liberation Mono", monospace' fill="#21808d" stroke="#21808d" stroke-width="0.4" textLength="35.6" lengthAdjust="spacingAndGlyphs">22</text>
<g font-size="34" font-family='"Liberation Mono", monospace'><text x="184.0" y="1518.0" fill="#000000" font-weight="bold" textLength="19.0" lengthAdjust="spacingAndGlyphs">A</text><text x="203.0" y="1518.0" fill="#f0288c" stroke="#f0288c" stroke-width="0.45" textLength="19.0" lengthAdjust="spacingAndGlyphs">(</text><text x="222.0" y="1518.0" fill="#0000ff" stroke="#0000ff" stroke-width="0.45" textLength="19.0" lengthAdjust="spacingAndGlyphs">m</text><text x="241.0" y="1518.0" fill="#daa520" stroke="#daa520" stroke-width="0.45" textLength="19.0" lengthAdjust="spacingAndGlyphs">;</text><text x="279.0" y="1518.0" fill="#0000ff" stroke="#0000ff" stroke-width="0.45" textLength="19.0" lengthAdjust="spacingAndGlyphs">n</text><text x="298.0" y="1518.0" fill="#f0288c" stroke="#f0288c" stroke-width="0.45" textLength="19.0" lengthAdjust="spacingAndGlyphs">)</text><text x="336.0" y="1518.0" fill="#daa520" stroke="#daa520" stroke-width="0.45" textLength="19.0" lengthAdjust="spacingAndGlyphs">=</text><text x="374.0" y="1518.0" fill="#000000" font-weight="bold" textLength="57.0" lengthAdjust="spacingAndGlyphs">k_2</text><text x="431.0" y="1518.0" fill="#f0288c" stroke="#f0288c" stroke-width="0.45" textLength="19.0" lengthAdjust="spacingAndGlyphs">(</text><text x="450.0" y="1518.0" fill="#0000ff" stroke="#0000ff" stroke-width="0.45" textLength="19.0" lengthAdjust="spacingAndGlyphs">m</text><text x="469.0" y="1518.0" fill="#f0288c" stroke="#f0288c" stroke-width="0.45" textLength="19.0" lengthAdjust="spacingAndGlyphs">)</text><text x="507.0" y="1518.0" fill="#daa520" stroke="#daa520" stroke-width="0.45" textLength="19.0" lengthAdjust="spacingAndGlyphs">+</text><text x="545.0" y="1518.0" fill="#0000ff" stroke="#0000ff" stroke-width="0.45" textLength="57.0" lengthAdjust="spacingAndGlyphs">α_2</text><text x="602.0" y="1518.0" fill="#daa520" stroke="#daa520" stroke-width="0.45" textLength="19.0" lengthAdjust="spacingAndGlyphs">*</text><text x="621.0" y="1518.0" fill="#000000" font-weight="bold" textLength="57.0" lengthAdjust="spacingAndGlyphs">k_2</text><text x="678.0" y="1518.0" fill="#f0288c" stroke="#f0288c" stroke-width="0.45" textLength="19.0" lengthAdjust="spacingAndGlyphs">(</text><text x="697.0" y="1518.0" fill="#0000ff" stroke="#0000ff" stroke-width="0.45" textLength="19.0" lengthAdjust="spacingAndGlyphs">n</text><text x="716.0" y="1518.0" fill="#f0288c" stroke="#f0288c" stroke-width="0.45" textLength="19.0" lengthAdjust="spacingAndGlyphs">)</text><text x="735.0" y="1518.0" fill="#1e7f1e" stroke="#1e7f1e" stroke-width="0.45" textLength="114.0" lengthAdjust="spacingAndGlyphs">&#x27; =&gt; &#x27;</text><text x="849.0" y="1518.0" fill="#000000" font-weight="bold" textLength="57.0" lengthAdjust="spacingAndGlyphs">A_1</text><text x="906.0" y="1518.0" fill="#f0288c" stroke="#f0288c" stroke-width="0.45" textLength="19.0" lengthAdjust="spacingAndGlyphs">(</text><text x="925.0" y="1518.0" fill="#0000ff" stroke="#0000ff" stroke-width="0.45" textLength="19.0" lengthAdjust="spacingAndGlyphs">m</text><text x="944.0" y="1518.0" fill="#daa520" stroke="#daa520" stroke-width="0.45" textLength="19.0" lengthAdjust="spacingAndGlyphs">;</text><text x="982.0" y="1518.0" fill="#0000ff" stroke="#0000ff" stroke-width="0.45" textLength="19.0" lengthAdjust="spacingAndGlyphs">n</text><text x="1001.0" y="1518.0" fill="#f0288c" stroke="#f0288c" stroke-width="0.45" textLength="19.0" lengthAdjust="spacingAndGlyphs">)</text><text x="1039.0" y="1518.0" fill="#daa520" stroke="#daa520" stroke-width="0.45" textLength="19.0" lengthAdjust="spacingAndGlyphs">=</text><text x="1077.0" y="1518.0" fill="#000000" stroke="#000000" stroke-width="0.45" textLength="19.0" lengthAdjust="spacingAndGlyphs">1</text><text x="1096.0" y="1518.0" fill="#daa520" stroke="#daa520" stroke-width="0.45" textLength="19.0" lengthAdjust="spacingAndGlyphs">/</text><text x="1115.0" y="1518.0" fill="#000000" font-weight="bold" textLength="19.0" lengthAdjust="spacingAndGlyphs">A</text><text x="1134.0" y="1518.0" fill="#f0288c" stroke="#f0288c" stroke-width="0.45" textLength="19.0" lengthAdjust="spacingAndGlyphs">(</text><text x="1153.0" y="1518.0" fill="#0000ff" stroke="#0000ff" stroke-width="0.45" textLength="19.0" lengthAdjust="spacingAndGlyphs">m</text><text x="1172.0" y="1518.0" fill="#daa520" stroke="#daa520" stroke-width="0.45" textLength="19.0" lengthAdjust="spacingAndGlyphs">;</text><text x="1210.0" y="1518.0" fill="#0000ff" stroke="#0000ff" stroke-width="0.45" textLength="19.0" lengthAdjust="spacingAndGlyphs">n</text><text x="1229.0" y="1518.0" fill="#f0288c" stroke="#f0288c" stroke-width="0.45" textLength="19.0" lengthAdjust="spacingAndGlyphs">)</text><text x="1248.0" y="1518.0" fill="#daa520" stroke="#daa520" stroke-width="0.45" textLength="19.0" lengthAdjust="spacingAndGlyphs">^</text><text x="1267.0" y="1518.0" fill="#000000" stroke="#000000" stroke-width="0.45" textLength="19.0" lengthAdjust="spacingAndGlyphs">2</text></g>
<text x="100.2" y="1569.0" font-size="31.5" font-family='"Liberation Mono", monospace' fill="#21808d" stroke="#21808d" stroke-width="0.4" textLength="35.6" lengthAdjust="spacingAndGlyphs">23</text>
<g font-size="34" font-family='"Liberation Mono", monospace'><text x="184.0" y="1569.0" fill="#000000" font-weight="bold" textLength="19.0" lengthAdjust="spacingAndGlyphs">B</text><text x="203.0" y="1569.0" fill="#f0288c" stroke="#f0288c" stroke-width="0.45" textLength="19.0" lengthAdjust="spacingAndGlyphs">(</text><text x="222.0" y="1569.0" fill="#0000ff" stroke="#0000ff" stroke-width="0.45" textLength="19.0" lengthAdjust="spacingAndGlyphs">m</text><text x="241.0" y="1569.0" fill="#daa520" stroke="#daa520" stroke-width="0.45" textLength="19.0" lengthAdjust="spacingAndGlyphs">;</text><text x="279.0" y="1569.0" fill="#0000ff" stroke="#0000ff" stroke-width="0.45" textLength="19.0" lengthAdjust="spacingAndGlyphs">n</text><text x="298.0" y="1569.0" fill="#f0288c" stroke="#f0288c" stroke-width="0.45" textLength="19.0" lengthAdjust="spacingAndGlyphs">)</text><text x="336.0" y="1569.0" fill="#daa520" stroke="#daa520" stroke-width="0.45" textLength="19.0" lengthAdjust="spacingAndGlyphs">=</text><text x="374.0" y="1569.0" fill="#000000" font-weight="bold" textLength="57.0" lengthAdjust="spacingAndGlyphs">k_2</text><text x="431.0" y="1569.0" fill="#f0288c" stroke="#f0288c" stroke-width="0.45" textLength="19.0" lengthAdjust="spacingAndGlyphs">(</text><text x="450.0" y="1569.0" fill="#0000ff" stroke="#0000ff" stroke-width="0.45" textLength="19.0" lengthAdjust="spacingAndGlyphs">m</text><text x="469.0" y="1569.0" fill="#f0288c" stroke="#f0288c" stroke-width="0.45" textLength="19.0" lengthAdjust="spacingAndGlyphs">)</text><text x="507.0" y="1569.0" fill="#daa520" stroke="#daa520" stroke-width="0.45" textLength="19.0" lengthAdjust="spacingAndGlyphs">+</text><text x="545.0" y="1569.0" fill="#0000ff" stroke="#0000ff" stroke-width="0.45" textLength="19.0" lengthAdjust="spacingAndGlyphs">v</text><text x="564.0" y="1569.0" fill="#daa520" stroke="#daa520" stroke-width="0.45" textLength="19.0" lengthAdjust="spacingAndGlyphs">*</text><text x="583.0" y="1569.0" fill="#0000ff" stroke="#0000ff" stroke-width="0.45" textLength="57.0" lengthAdjust="spacingAndGlyphs">α_2</text><text x="640.0" y="1569.0" fill="#daa520" stroke="#daa520" stroke-width="0.45" textLength="19.0" lengthAdjust="spacingAndGlyphs">*</text><text x="659.0" y="1569.0" fill="#000000" font-weight="bold" textLength="57.0" lengthAdjust="spacingAndGlyphs">k_2</text><text x="716.0" y="1569.0" fill="#f0288c" stroke="#f0288c" stroke-width="0.45" textLength="19.0" lengthAdjust="spacingAndGlyphs">(</text><text x="735.0" y="1569.0" fill="#0000ff" stroke="#0000ff" stroke-width="0.45" textLength="19.0" lengthAdjust="spacingAndGlyphs">n</text><text x="754.0" y="1569.0" fill="#f0288c" stroke="#f0288c" stroke-width="0.45" textLength="19.0" lengthAdjust="spacingAndGlyphs">)</text><text x="773.0" y="1569.0" fill="#1e7f1e" stroke="#1e7f1e" stroke-width="0.45" textLength="114.0" lengthAdjust="spacingAndGlyphs">&#x27; =&gt; &#x27;</text><text x="887.0" y="1569.0" fill="#000000" font-weight="bold" textLength="57.0" lengthAdjust="spacingAndGlyphs">B_1</text><text x="944.0" y="1569.0" fill="#f0288c" stroke="#f0288c" stroke-width="0.45" textLength="19.0" lengthAdjust="spacingAndGlyphs">(</text><text x="963.0" y="1569.0" fill="#0000ff" stroke="#0000ff" stroke-width="0.45" textLength="19.0" lengthAdjust="spacingAndGlyphs">m</text><text x="982.0" y="1569.0" fill="#daa520" stroke="#daa520" stroke-width="0.45" textLength="19.0" lengthAdjust="spacingAndGlyphs">;</text><text x="1020.0" y="1569.0" fill="#0000ff" stroke="#0000ff" stroke-width="0.45" textLength="19.0" lengthAdjust="spacingAndGlyphs">n</text><text x="1039.0" y="1569.0" fill="#f0288c" stroke="#f0288c" stroke-width="0.45" textLength="19.0" lengthAdjust="spacingAndGlyphs">)</text><text x="1077.0" y="1569.0" fill="#daa520" stroke="#daa520" stroke-width="0.45" textLength="19.0" lengthAdjust="spacingAndGlyphs">=</text><text x="1115.0" y="1569.0" fill="#000000" font-weight="bold" textLength="19.0" lengthAdjust="spacingAndGlyphs">B</text><text x="1134.0" y="1569.0" fill="#f0288c" stroke="#f0288c" stroke-width="0.45" textLength="19.0" lengthAdjust="spacingAndGlyphs">(</text><text x="1153.0" y="1569.0" fill="#0000ff" stroke="#0000ff" stroke-width="0.45" textLength="19.0" lengthAdjust="spacingAndGlyphs">m</text><text x="1172.0" y="1569.0" fill="#daa520" stroke="#daa520" stroke-width="0.45" textLength="19.0" lengthAdjust="spacingAndGlyphs">;</text><text x="1210.0" y="1569.0" fill="#0000ff" stroke="#0000ff" stroke-width="0.45" textLength="19.0" lengthAdjust="spacingAndGlyphs">n</text><text x="1229.0" y="1569.0" fill="#f0288c" stroke="#f0288c" stroke-width="0.45" textLength="19.0" lengthAdjust="spacingAndGlyphs">)</text><text x="1248.0" y="1569.0" fill="#daa520" stroke="#daa520" stroke-width="0.45" textLength="19.0" lengthAdjust="spacingAndGlyphs">/</text><text x="1267.0" y="1569.0" fill="#000000" font-weight="bold" textLength="19.0" lengthAdjust="spacingAndGlyphs">A</text><text x="1286.0" y="1569.0" fill="#f0288c" stroke="#f0288c" stroke-width="0.45" textLength="19.0" lengthAdjust="spacingAndGlyphs">(</text><text x="1305.0" y="1569.0" fill="#0000ff" stroke="#0000ff" stroke-width="0.45" textLength="19.0" lengthAdjust="spacingAndGlyphs">m</text><text x="1324.0" y="1569.0" fill="#daa520" stroke="#daa520" stroke-width="0.45" textLength="19.0" lengthAdjust="spacingAndGlyphs">;</text></g>
<g font-size="34" font-family='"Liberation Mono", monospace'><text x="184.0" y="1610.0" fill="#0000ff" stroke="#0000ff" stroke-width="0.45" textLength="19.0" lengthAdjust="spacingAndGlyphs">n</text><text x="203.0" y="1610.0" fill="#f0288c" stroke="#f0288c" stroke-width="0.45" textLength="19.0" lengthAdjust="spacingAndGlyphs">)</text><text x="222.0" y="1610.0" fill="#daa520" stroke="#daa520" stroke-width="0.45" textLength="19.0" lengthAdjust="spacingAndGlyphs">^</text><text x="241.0" y="1610.0" fill="#000000" stroke="#000000" stroke-width="0.45" textLength="19.0" lengthAdjust="spacingAndGlyphs">2</text></g>
<text x="100.2" y="1661.0" font-size="31.5" font-family='"Liberation Mono", monospace' fill="#21808d" stroke="#21808d" stroke-width="0.4" textLength="35.6" lengthAdjust="spacingAndGlyphs">24</text>
<g font-size="34" font-family='"Liberation Mono", monospace'><text x="184.0" y="1661.0" fill="#000000" font-weight="bold" textLength="19.0" lengthAdjust="spacingAndGlyphs">C</text><text x="203.0" y="1661.0" fill="#f0288c" stroke="#f0288c" stroke-width="0.45" textLength="19.0" lengthAdjust="spacingAndGlyphs">(</text><text x="222.0" y="1661.0" fill="#0000ff" stroke="#0000ff" stroke-width="0.45" textLength="19.0" lengthAdjust="spacingAndGlyphs">m</text><text x="241.0" y="1661.0" fill="#daa520" stroke="#daa520" stroke-width="0.45" textLength="19.0" lengthAdjust="spacingAndGlyphs">;</text><text x="279.0" y="1661.0" fill="#0000ff" stroke="#0000ff" stroke-width="0.45" textLength="19.0" lengthAdjust="spacingAndGlyphs">n</text><text x="298.0" y="1661.0" fill="#f0288c" stroke="#f0288c" stroke-width="0.45" textLength="19.0" lengthAdjust="spacingAndGlyphs">)</text><text x="336.0" y="1661.0" fill="#daa520" stroke="#daa520" stroke-width="0.45" textLength="19.0" lengthAdjust="spacingAndGlyphs">=</text><text x="374.0" y="1661.0" fill="#0000ff" stroke="#0000ff" stroke-width="0.45" textLength="19.0" lengthAdjust="spacingAndGlyphs">v</text><text x="393.0" y="1661.0" fill="#daa520" stroke="#daa520" stroke-width="0.45" textLength="19.0" lengthAdjust="spacingAndGlyphs">*</text><text x="412.0" y="1661.0" fill="#000000" font-weight="bold" textLength="57.0" lengthAdjust="spacingAndGlyphs">k_2</text><text x="469.0" y="1661.0" fill="#f0288c" stroke="#f0288c" stroke-width="0.45" textLength="19.0" lengthAdjust="spacingAndGlyphs">(</text><text x="488.0" y="1661.0" fill="#0000ff" stroke="#0000ff" stroke-width="0.45" textLength="19.0" lengthAdjust="spacingAndGlyphs">m</text><text x="507.0" y="1661.0" fill="#f0288c" stroke="#f0288c" stroke-width="0.45" textLength="19.0" lengthAdjust="spacingAndGlyphs">)</text><text x="545.0" y="1661.0" fill="#daa520" stroke="#daa520" stroke-width="0.45" textLength="19.0" lengthAdjust="spacingAndGlyphs">+</text><text x="583.0" y="1661.0" fill="#0000ff" stroke="#0000ff" stroke-width="0.45" textLength="57.0" lengthAdjust="spacingAndGlyphs">α_2</text><text x="640.0" y="1661.0" fill="#daa520" stroke="#daa520" stroke-width="0.45" textLength="19.0" lengthAdjust="spacingAndGlyphs">*</text><text x="659.0" y="1661.0" fill="#000000" font-weight="bold" textLength="57.0" lengthAdjust="spacingAndGlyphs">k_2</text><text x="716.0" y="1661.0" fill="#f0288c" stroke="#f0288c" stroke-width="0.45" textLength="19.0" lengthAdjust="spacingAndGlyphs">(</text><text x="735.0" y="1661.0" fill="#0000ff" stroke="#0000ff" stroke-width="0.45" textLength="19.0" lengthAdjust="spacingAndGlyphs">n</text><text x="754.0" y="1661.0" fill="#f0288c" stroke="#f0288c" stroke-width="0.45" textLength="19.0" lengthAdjust="spacingAndGlyphs">)</text><text x="773.0" y="1661.0" fill="#1e7f1e" stroke="#1e7f1e" stroke-width="0.45" textLength="114.0" lengthAdjust="spacingAndGlyphs">&#x27; =&gt; &#x27;</text><text x="887.0" y="1661.0" fill="#000000" font-weight="bold" textLength="57.0" lengthAdjust="spacingAndGlyphs">C_1</text><text x="944.0" y="1661.0" fill="#f0288c" stroke="#f0288c" stroke-width="0.45" textLength="19.0" lengthAdjust="spacingAndGlyphs">(</text><text x="963.0" y="1661.0" fill="#0000ff" stroke="#0000ff" stroke-width="0.45" textLength="19.0" lengthAdjust="spacingAndGlyphs">m</text><text x="982.0" y="1661.0" fill="#daa520" stroke="#daa520" stroke-width="0.45" textLength="19.0" lengthAdjust="spacingAndGlyphs">;</text><text x="1020.0" y="1661.0" fill="#0000ff" stroke="#0000ff" stroke-width="0.45" textLength="19.0" lengthAdjust="spacingAndGlyphs">n</text><text x="1039.0" y="1661.0" fill="#f0288c" stroke="#f0288c" stroke-width="0.45" textLength="19.0" lengthAdjust="spacingAndGlyphs">)</text><text x="1077.0" y="1661.0" fill="#daa520" stroke="#daa520" stroke-width="0.45" textLength="19.0" lengthAdjust="spacingAndGlyphs">=</text><text x="1115.0" y="1661.0" fill="#000000" font-weight="bold" textLength="19.0" lengthAdjust="spacingAndGlyphs">C</text><text x="1134.0" y="1661.0" fill="#f0288c" stroke="#f0288c" stroke-width="0.45" textLength="19.0" lengthAdjust="spacingAndGlyphs">(</text><text x="1153.0" y="1661.0" fill="#0000ff" stroke="#0000ff" stroke-width="0.45" textLength="19.0" lengthAdjust="spacingAndGlyphs">m</text><text x="1172.0" y="1661.0" fill="#daa520" stroke="#daa520" stroke-width="0.45" textLength="19.0" lengthAdjust="spacingAndGlyphs">;</text><text x="1210.0" y="1661.0" fill="#0000ff" stroke="#0000ff" stroke-width="0.45" textLength="19.0" lengthAdjust="spacingAndGlyphs">n</text><text x="1229.0" y="1661.0" fill="#f0288c" stroke="#f0288c" stroke-width="0.45" textLength="19.0" lengthAdjust="spacingAndGlyphs">)</text><text x="1248.0" y="1661.0" fill="#daa520" stroke="#daa520" stroke-width="0.45" textLength="19.0" lengthAdjust="spacingAndGlyphs">/</text><text x="1267.0" y="1661.0" fill="#000000" font-weight="bold" textLength="19.0" lengthAdjust="spacingAndGlyphs">A</text><text x="1286.0" y="1661.0" fill="#f0288c" stroke="#f0288c" stroke-width="0.45" textLength="19.0" lengthAdjust="spacingAndGlyphs">(</text><text x="1305.0" y="1661.0" fill="#0000ff" stroke="#0000ff" stroke-width="0.45" textLength="19.0" lengthAdjust="spacingAndGlyphs">m</text><text x="1324.0" y="1661.0" fill="#daa520" stroke="#daa520" stroke-width="0.45" textLength="19.0" lengthAdjust="spacingAndGlyphs">;</text></g>
<g font-size="34" font-family='"Liberation Mono", monospace'><text x="184.0" y="1702.0" fill="#0000ff" stroke="#0000ff" stroke-width="0.45" textLength="19.0" lengthAdjust="spacingAndGlyphs">n</text><text x="203.0" y="1702.0" fill="#f0288c" stroke="#f0288c" stroke-width="0.45" textLength="19.0" lengthAdjust="spacingAndGlyphs">)</text><text x="222.0" y="1702.0" fill="#daa520" stroke="#daa520" stroke-width="0.45" textLength="19.0" lengthAdjust="spacingAndGlyphs">^</text><text x="241.0" y="1702.0" fill="#000000" stroke="#000000" stroke-width="0.45" textLength="19.0" lengthAdjust="spacingAndGlyphs">2</text></g>
<text x="100.2" y="1753.0" font-size="31.5" font-family='"Liberation Mono", monospace' fill="#21808d" stroke="#21808d" stroke-width="0.4" textLength="35.6" lengthAdjust="spacingAndGlyphs">25</text>
<g font-size="34" font-family='"Liberation Mono", monospace'><text x="184.0" y="1753.0" fill="#000000" font-weight="bold" textLength="57.0" lengthAdjust="spacingAndGlyphs">S_a</text><text x="241.0" y="1753.0" fill="#f0288c" stroke="#f0288c" stroke-width="0.45" textLength="19.0" lengthAdjust="spacingAndGlyphs">(</text><text x="260.0" y="1753.0" fill="#0000ff" stroke="#0000ff" stroke-width="0.45" textLength="19.0" lengthAdjust="spacingAndGlyphs">m</text><text x="279.0" y="1753.0" fill="#daa520" stroke="#daa520" stroke-width="0.45" textLength="19.0" lengthAdjust="spacingAndGlyphs">;</text><text x="317.0" y="1753.0" fill="#0000ff" stroke="#0000ff" stroke-width="0.45" textLength="19.0" lengthAdjust="spacingAndGlyphs">x</text><text x="336.0" y="1753.0" fill="#f0288c" stroke="#f0288c" stroke-width="0.45" textLength="19.0" lengthAdjust="spacingAndGlyphs">)</text><text x="374.0" y="1753.0" fill="#daa520" stroke="#daa520" stroke-width="0.45" textLength="19.0" lengthAdjust="spacingAndGlyphs">=</text><text x="412.0" y="1753.0" fill="#000000" font-weight="bold" textLength="57.0" lengthAdjust="spacingAndGlyphs">sin</text><text x="469.0" y="1753.0" fill="#f0288c" stroke="#f0288c" stroke-width="0.45" textLength="19.0" lengthAdjust="spacingAndGlyphs">(</text><text x="488.0" y="1753.0" fill="#000000" font-weight="bold" textLength="19.0" lengthAdjust="spacingAndGlyphs">k</text><text x="507.0" y="1753.0" fill="#f0288c" stroke="#f0288c" stroke-width="0.45" textLength="19.0" lengthAdjust="spacingAndGlyphs">(</text><text x="526.0" y="1753.0" fill="#0000ff" stroke="#0000ff" stroke-width="0.45" textLength="19.0" lengthAdjust="spacingAndGlyphs">m</text><text x="545.0" y="1753.0" fill="#f0288c" stroke="#f0288c" stroke-width="0.45" textLength="19.0" lengthAdjust="spacingAndGlyphs">)</text><text x="564.0" y="1753.0" fill="#daa520" stroke="#daa520" stroke-width="0.45" textLength="19.0" lengthAdjust="spacingAndGlyphs">*</text><text x="583.0" y="1753.0" fill="#0000ff" stroke="#0000ff" stroke-width="0.45" textLength="19.0" lengthAdjust="spacingAndGlyphs">π</text><text x="602.0" y="1753.0" fill="#daa520" stroke="#daa520" stroke-width="0.45" textLength="19.0" lengthAdjust="spacingAndGlyphs">/</text><text x="621.0" y="1753.0" fill="#0000ff" stroke="#0000ff" stroke-width="0.45" textLength="19.0" lengthAdjust="spacingAndGlyphs">a</text><text x="640.0" y="1753.0" fill="#daa520" stroke="#daa520" stroke-width="0.45" textLength="19.0" lengthAdjust="spacingAndGlyphs">*</text><text x="659.0" y="1753.0" fill="#0000ff" stroke="#0000ff" stroke-width="0.45" textLength="19.0" lengthAdjust="spacingAndGlyphs">x</text><text x="678.0" y="1753.0" fill="#f0288c" stroke="#f0288c" stroke-width="0.45" textLength="19.0" lengthAdjust="spacingAndGlyphs">)</text><text x="697.0" y="1753.0" fill="#daa520" stroke="#daa520" stroke-width="0.45" textLength="19.0" lengthAdjust="spacingAndGlyphs">/</text><text x="716.0" y="1753.0" fill="#000000" font-weight="bold" textLength="19.0" lengthAdjust="spacingAndGlyphs">k</text><text x="735.0" y="1753.0" fill="#f0288c" stroke="#f0288c" stroke-width="0.45" textLength="19.0" lengthAdjust="spacingAndGlyphs">(</text><text x="754.0" y="1753.0" fill="#0000ff" stroke="#0000ff" stroke-width="0.45" textLength="19.0" lengthAdjust="spacingAndGlyphs">m</text><text x="773.0" y="1753.0" fill="#f0288c" stroke="#f0288c" stroke-width="0.45" textLength="19.0" lengthAdjust="spacingAndGlyphs">)</text><text x="792.0" y="1753.0" fill="#1e7f1e" stroke="#1e7f1e" stroke-width="0.45" textLength="76.0" lengthAdjust="spacingAndGlyphs">&#x27;, &#x27;</text><text x="868.0" y="1753.0" fill="#000000" font-weight="bold" textLength="57.0" lengthAdjust="spacingAndGlyphs">S_b</text><text x="925.0" y="1753.0" fill="#f0288c" stroke="#f0288c" stroke-width="0.45" textLength="19.0" lengthAdjust="spacingAndGlyphs">(</text><text x="944.0" y="1753.0" fill="#0000ff" stroke="#0000ff" stroke-width="0.45" textLength="19.0" lengthAdjust="spacingAndGlyphs">n</text><text x="963.0" y="1753.0" fill="#daa520" stroke="#daa520" stroke-width="0.45" textLength="19.0" lengthAdjust="spacingAndGlyphs">;</text><text x="1001.0" y="1753.0" fill="#0000ff" stroke="#0000ff" stroke-width="0.45" textLength="19.0" lengthAdjust="spacingAndGlyphs">y</text><text x="1020.0" y="1753.0" fill="#f0288c" stroke="#f0288c" stroke-width="0.45" textLength="19.0" lengthAdjust="spacingAndGlyphs">)</text><text x="1058.0" y="1753.0" fill="#daa520" stroke="#daa520" stroke-width="0.45" textLength="19.0" lengthAdjust="spacingAndGlyphs">=</text><text x="1096.0" y="1753.0" fill="#000000" font-weight="bold" textLength="57.0" lengthAdjust="spacingAndGlyphs">sin</text><text x="1153.0" y="1753.0" fill="#f0288c" stroke="#f0288c" stroke-width="0.45" textLength="19.0" lengthAdjust="spacingAndGlyphs">(</text><text x="1172.0" y="1753.0" fill="#000000" font-weight="bold" textLength="19.0" lengthAdjust="spacingAndGlyphs">k</text><text x="1191.0" y="1753.0" fill="#f0288c" stroke="#f0288c" stroke-width="0.45" textLength="19.0" lengthAdjust="spacingAndGlyphs">(</text><text x="1210.0" y="1753.0" fill="#0000ff" stroke="#0000ff" stroke-width="0.45" textLength="19.0" lengthAdjust="spacingAndGlyphs">n</text><text x="1229.0" y="1753.0" fill="#f0288c" stroke="#f0288c" stroke-width="0.45" textLength="19.0" lengthAdjust="spacingAndGlyphs">)</text><text x="1248.0" y="1753.0" fill="#daa520" stroke="#daa520" stroke-width="0.45" textLength="19.0" lengthAdjust="spacingAndGlyphs">*</text><text x="1267.0" y="1753.0" fill="#0000ff" stroke="#0000ff" stroke-width="0.45" textLength="19.0" lengthAdjust="spacingAndGlyphs">π</text><text x="1286.0" y="1753.0" fill="#daa520" stroke="#daa520" stroke-width="0.45" textLength="19.0" lengthAdjust="spacingAndGlyphs">/</text></g>
</g>
<rect x="24" y="1754" width="1446" height="72" fill="#f0eff2"/>
<text x="60.6" y="1797.6" font-size="32" fill="#000" text-anchor="middle">‰</text>
<text x="113.7" y="1797.6" font-size="32" fill="#000" text-anchor="middle">°</text>
<text x="155.5" y="1797.6" font-size="32" fill="#000" text-anchor="middle">′</text>
<text x="198.5" y="1797.6" font-size="32" fill="#000" text-anchor="middle">″</text>
<text x="241.3" y="1797.6" font-size="32" fill="#000" text-anchor="middle">ø</text>
<text x="284.3" y="1797.6" font-size="32" fill="#000" text-anchor="middle">α</text>
<text x="326.7" y="1797.6" font-size="32" fill="#000" text-anchor="middle">β</text>
<text x="368.2" y="1797.6" font-size="32" fill="#000" text-anchor="middle">γ</text>
<text x="411.5" y="1797.6" font-size="32" fill="#000" text-anchor="middle">δ</text>
<text x="453.3" y="1797.6" font-size="32" fill="#000" text-anchor="middle">ε</text>
<text x="496.4" y="1797.6" font-size="32" fill="#000" text-anchor="middle">ζ</text>
<text x="538.8" y="1797.6" font-size="32" fill="#000" text-anchor="middle">η</text>
<text x="581.2" y="1797.6" font-size="32" fill="#000" text-anchor="middle">θ</text>
<text x="623.6" y="1797.6" font-size="32" fill="#000" text-anchor="middle">ϑ</text>
<text x="666.0" y="1797.6" font-size="32" fill="#000" text-anchor="middle">ι</text>
<text x="708.4" y="1797.6" font-size="32" fill="#000" text-anchor="middle">κ</text>
<text x="752.0" y="1797.6" font-size="32" fill="#000" text-anchor="middle">λ</text>
<text x="794.0" y="1797.6" font-size="32" fill="#000" text-anchor="middle">μ</text>
<text x="835.5" y="1797.6" font-size="32" fill="#000" text-anchor="middle">ν</text>
<text x="878.5" y="1797.6" font-size="32" fill="#000" text-anchor="middle">ξ</text>
<text x="921.5" y="1797.6" font-size="32" fill="#000" text-anchor="middle">ο</text>
<text x="962.9" y="1797.6" font-size="32" fill="#000" text-anchor="middle">π</text>
<text x="1005.8" y="1797.6" font-size="32" fill="#000" text-anchor="middle">ρ</text>
<text x="1048.8" y="1797.6" font-size="32" fill="#000" text-anchor="middle">ς</text>
<text x="1091.0" y="1797.6" font-size="32" fill="#000" text-anchor="middle">σ</text>
<text x="1134.8" y="1797.6" font-size="32" fill="#000" text-anchor="middle">τ</text>
<text x="1176.0" y="1797.6" font-size="32" fill="#000" text-anchor="middle">υ</text>
<text x="1219.0" y="1797.6" font-size="32" fill="#000" text-anchor="middle">φ</text>
<text x="1261.5" y="1797.6" font-size="32" fill="#000" text-anchor="middle">χ</text>
<text x="1303.5" y="1797.6" font-size="32" fill="#000" text-anchor="middle">ψ</text>
<text x="1346.5" y="1797.6" font-size="32" fill="#000" text-anchor="middle">ω</text>
<rect x="1374.5" y="1764" width="75.5" height="44" rx="14" fill="#ffffff" stroke="#dddce0" stroke-width="2"/>
<text x="1390.0" y="1796.5" font-size="32" fill="#000" textLength="44.9" lengthAdjust="spacingAndGlyphs">aA</text>
<rect x="23" y="230.7" width="1448" height="1595.8" rx="10" fill="none" stroke="#adabb0" stroke-width="2"/>
<rect x="34" y="229" width="93" height="4" fill="#f6f5f8"/>
<text x="41.0" y="241.0" font-size="33" fill="#000" textLength="75.0" lengthAdjust="spacingAndGlyphs" stroke="#000" stroke-width="0.6">Code</text>
<defs><clipPath id="clipPlot1"><rect x="1702" y="416" width="750" height="500"/></clipPath><clipPath id="clipPlot2"><rect x="1702" y="1254.5" width="750" height="500"/></clipPath></defs>
<rect x="1511" y="230.3" width="1449.7" height="1596.7" rx="10" fill="#fefdff" stroke="#d6d5d9" stroke-width="2"/>
<rect x="1521" y="228" width="126" height="5" fill="#f6f5f8"/>
<text x="1530.0" y="242.0" font-size="33" fill="#000" textLength="105.1" lengthAdjust="spacingAndGlyphs" stroke="#000" stroke-width="0.7">Output</text>
<rect x="1530" y="244.5" width="26" height="2" fill="#000"/>
<path d="M2919,274 Q2920.5,272 2922,274 L2930,287 Q2931,290 2928,290 H2910 Q2907,290 2908,287 Z" fill="#8a888c" stroke="#8a888c" stroke-width="1.5" stroke-linejoin="round"/>
<path d="M2919,1793 Q2920.5,1795 2922,1793 L2930,1780 Q2931,1777 2928,1777 H2910 Q2907,1777 2908,1780 Z" fill="#8a888c" stroke="#8a888c" stroke-width="1.5" stroke-linejoin="round"/>
<rect x="2908" y="886" width="22" height="263.5" rx="11" fill="#8a888b"/>
<g clip-path="url(#clipOut)">
<text x="1592.0" y="318.7" font-size="38" fill="#000" textLength="177.1" lengthAdjust="spacingAndGlyphs">Deflections</text>
<defs><linearGradient id="gShade1" x1="0" y1="0" x2="0" y2="1"><stop offset="0" stop-color="#000" stop-opacity="0.62"/><stop offset="0.25" stop-color="#000" stop-opacity="0.3"/><stop offset="0.5" stop-color="#000" stop-opacity="0.12"/><stop offset="0.8" stop-color="#000" stop-opacity="0"/></linearGradient></defs>
<g clip-path="url(#clipPlot1)"><rect x="1702" y="416" width="750" height="500" fill="#ff1a00"/><path d="M2143.7,429.3L2052.0,428.9L1965.3,430.1L1900.3,432.6L1850.3,436.5L1813.7,441.9L1798.7,445.5L1787.0,449.1L1777.0,453.3L1767.0,458.8L1758.7,465.0L1752.0,471.6L1743.1,484.3L1736.3,499.3L1730.9,517.7L1726.5,541.0L1723.1,571.0L1721.0,606.0L1719.8,647.7L1719.9,691.0L1721.0,727.7L1723.1,761.0L1726.0,787.7L1730.1,811.0L1735.1,829.3L1741.3,844.3L1748.7,856.3L1758.7,867.0L1766.1,872.7L1774.8,877.7L1795.3,885.6L1822.0,891.6L1858.7,896.3L1907.0,899.7L1968.7,901.9L2047.0,903.0L2130.3,902.8L2197.0,901.6L2250.3,899.6L2293.7,896.5L2327.0,892.4L2353.7,887.0L2373.7,880.2L2382.4,876.0L2390.3,871.0L2402.0,860.4L2410.0,849.3L2415.8,837.7L2421.0,822.7L2424.9,806.0L2428.4,784.3L2431.0,759.3L2434.0,697.7L2434.3,657.7L2433.6,619.3L2432.0,586.0L2429.4,556.0L2426.1,532.7L2421.9,512.7L2416.4,496.0L2410.0,482.7L2404.3,474.3L2398.7,468.1L2392.0,462.3L2383.7,456.7L2365.3,448.5L2340.3,441.9L2307.0,436.9L2265.3,433.3L2212.0,430.8L2143.7,429.3Z" fill="#ff8000"/><path d="M2140.3,442.7L2063.7,441.9L1990.3,443.4L1928.7,446.8L1880.3,452.1L1843.7,459.1L1828.7,463.3L1815.3,468.2L1802.4,474.3L1792.0,480.8L1783.3,487.7L1775.3,495.7L1765.4,509.3L1757.7,524.3L1751.1,542.7L1746.2,562.7L1742.1,587.7L1739.2,617.7L1737.8,649.3L1737.8,682.7L1739.1,712.7L1741.7,741.0L1745.6,766.0L1750.3,786.5L1756.3,804.3L1763.7,819.8L1772.3,832.7L1783.3,844.3L1791.7,851.0L1800.3,856.5L1810.3,861.6L1822.0,866.4L1849.6,874.3L1883.7,880.4L1927.0,885.1L1980.3,888.2L2043.7,889.9L2112.0,889.9L2170.3,888.4L2220.3,885.6L2262.0,881.5L2296.6,876.0L2323.7,869.2L2345.3,860.9L2355.3,855.5L2363.7,850.0L2372.0,843.2L2378.7,836.3L2387.0,825.3L2394.0,812.7L2400.2,797.7L2405.1,781.0L2409.3,761.0L2412.5,739.3L2414.6,716.0L2416.0,689.3L2416.3,659.3L2415.5,631.0L2413.7,604.3L2410.7,579.3L2406.7,557.7L2401.8,539.3L2395.6,522.7L2388.7,509.4L2383.0,501.0L2375.9,492.7L2368.7,485.9L2359.9,479.3L2350.3,473.7L2340.3,468.9L2315.3,460.4L2283.7,453.6L2245.3,448.6L2197.0,444.9L2140.3,442.7Z" fill="#ffcc00"/><path d="M2132.0,456.0L2067.0,455.1L2003.7,456.7L1948.7,460.5L1902.0,466.6L1866.7,474.3L1850.9,479.3L1837.0,484.9L1824.9,491.0L1813.7,498.1L1803.9,506.0L1795.3,514.7L1785.5,527.7L1777.2,542.7L1770.3,559.8L1764.8,579.3L1760.6,601.0L1757.7,626.0L1756.2,652.7L1756.2,681.0L1757.8,707.7L1760.6,731.0L1764.8,752.7L1770.3,772.2L1777.2,789.3L1785.3,804.1L1794.2,816.0L1805.3,827.3L1814.3,834.3L1823.7,840.3L1845.3,850.6L1873.0,859.3L1905.3,866.0L1945.3,871.2L1993.7,874.8L2048.7,876.7L2107.0,876.6L2158.7,874.9L2203.7,871.7L2242.0,867.1L2275.3,860.7L2303.1,852.7L2325.3,843.1L2343.7,831.4L2358.7,817.3L2367.0,806.6L2374.3,794.3L2380.4,781.0L2386.1,764.3L2390.3,747.6L2393.9,727.7L2396.3,706.0L2397.7,684.3L2398.0,659.3L2397.1,636.0L2395.2,614.3L2392.0,592.7L2388.0,574.3L2382.9,557.7L2376.8,542.7L2369.6,529.3L2356.9,512.7L2348.7,504.7L2339.7,497.7L2329.1,491.0L2318.7,485.7L2293.7,476.2L2263.7,468.7L2227.0,462.9L2183.7,458.7L2132.0,456.0Z" fill="#f2e600"/><path d="M2117.0,469.3L2060.3,468.8L2003.7,470.9L1955.3,475.3L1913.7,482.0L1880.3,490.8L1866.1,496.0L1853.7,501.6L1842.0,508.0L1830.4,516.0L1820.7,524.3L1812.8,532.7L1803.7,544.9L1795.3,559.6L1788.5,576.0L1783.0,594.3L1779.0,614.3L1776.3,636.0L1775.0,659.3L1775.4,682.7L1777.1,704.3L1780.3,725.3L1784.8,744.3L1790.4,761.0L1797.2,776.0L1805.3,789.6L1815.3,802.2L1826.3,812.7L1835.3,819.6L1845.3,826.0L1867.0,836.4L1895.3,845.7L1927.0,852.5L1965.3,857.9L2008.7,861.4L2058.7,863.2L2108.7,862.9L2153.7,860.9L2195.3,857.1L2230.3,851.9L2260.3,845.2L2287.0,836.4L2308.6,826.0L2325.7,814.3L2341.2,799.3L2350.0,787.7L2356.8,776.0L2363.0,762.7L2368.2,747.7L2372.5,731.0L2375.5,714.3L2377.7,696.0L2378.9,676.0L2378.9,656.0L2377.7,636.0L2375.5,617.7L2372.1,599.3L2367.7,582.7L2362.3,567.7L2355.9,554.3L2348.8,542.7L2342.6,534.3L2335.0,526.0L2327.0,518.7L2317.0,511.2L2295.6,499.3L2270.3,489.7L2240.3,482.0L2205.3,476.1L2163.7,471.8L2117.0,469.3Z" fill="#b3e000"/><path d="M2130.3,484.2L2078.7,482.7L2027.0,484.1L1980.3,487.9L1938.7,494.4L1905.3,502.9L1890.3,508.1L1877.0,513.9L1865.3,520.0L1853.4,527.7L1843.7,535.4L1834.4,544.3L1824.9,556.0L1817.0,568.4L1810.0,582.7L1804.6,597.7L1800.2,614.3L1797.0,633.0L1795.2,652.7L1795.0,672.7L1796.1,691.0L1798.6,709.3L1802.2,726.0L1807.4,742.7L1813.9,757.7L1821.4,771.0L1830.0,782.7L1840.3,793.6L1858.3,807.7L1878.7,818.9L1902.0,828.1L1930.3,835.8L1963.7,841.9L2002.0,846.2L2043.7,848.7L2088.7,849.2L2130.3,847.8L2170.3,844.4L2205.3,839.5L2236.5,832.7L2262.5,824.3L2284.5,814.3L2303.7,802.1L2319.6,787.7L2327.9,777.7L2334.6,767.7L2341.0,756.0L2346.6,742.7L2350.9,729.3L2354.5,714.3L2357.0,699.3L2358.6,682.7L2359.1,666.0L2358.6,649.3L2357.0,632.7L2354.1,616.0L2350.4,601.0L2346.0,587.7L2340.1,574.3L2333.7,562.7L2321.1,546.0L2305.1,531.0L2285.3,518.1L2262.5,507.7L2236.5,499.3L2205.3,492.5L2170.3,487.6L2130.3,484.2Z" fill="#55dd00"/><path d="M2093.7,497.7L2050.3,498.0L2007.0,500.8L1968.7,506.0L1935.3,513.4L1907.7,522.7L1883.7,534.4L1873.5,541.0L1863.7,548.6L1855.3,556.4L1846.9,566.0L1838.8,577.7L1831.6,591.0L1826.1,604.3L1821.6,619.3L1818.3,636.0L1816.5,652.7L1816.1,669.3L1817.1,686.0L1819.4,702.7L1822.9,717.7L1827.3,731.0L1833.2,744.3L1840.3,756.8L1848.3,767.7L1857.4,777.7L1868.7,787.4L1887.0,799.5L1908.7,809.7L1933.7,818.1L1963.7,825.1L1997.0,830.1L2035.3,833.4L2073.7,834.5L2113.7,833.6L2148.8,831.0L2182.0,826.6L2210.3,820.8L2237.0,812.9L2258.7,803.8L2278.1,792.7L2293.7,780.4L2307.1,766.0L2314.2,756.0L2320.3,745.3L2325.4,734.3L2330.1,721.0L2333.6,707.7L2335.9,694.3L2337.9,666.0L2335.9,637.7L2333.6,624.3L2330.1,611.0L2325.4,597.7L2320.3,586.7L2314.2,576.0L2307.0,565.9L2293.0,551.0L2275.3,537.5L2254.1,526.0L2230.3,516.9L2202.0,509.3L2168.7,503.4L2132.0,499.5L2093.7,497.7Z" fill="#00cc44"/><path d="M2113.7,514.3L2073.7,513.2L2033.7,514.7L1997.0,518.7L1963.7,525.1L1935.3,533.5L1910.5,544.3L1899.0,551.0L1889.4,557.7L1872.8,572.7L1864.6,582.7L1857.9,592.7L1851.8,604.3L1847.1,616.0L1843.2,629.3L1840.6,642.7L1839.2,656.0L1839.0,671.0L1840.2,686.0L1842.4,699.3L1846.0,712.7L1850.3,724.3L1856.0,736.0L1862.2,746.0L1870.3,756.5L1879.5,766.0L1895.3,778.6L1913.8,789.3L1935.3,798.5L1960.1,806.0L1988.7,812.0L2019.0,816.0L2052.0,818.3L2087.0,818.8L2120.3,817.3L2152.0,814.0L2180.3,809.1L2207.0,802.4L2229.3,794.3L2249.5,784.3L2266.8,772.7L2281.2,759.3L2294.0,742.7L2299.8,732.7L2304.4,722.7L2308.5,711.0L2311.6,699.3L2314.8,676.0L2314.4,651.0L2310.4,627.7L2302.9,606.0L2298.0,596.0L2291.8,586.0L2279.6,571.0L2264.6,557.7L2246.6,546.0L2225.3,536.0L2202.0,528.2L2175.3,521.9L2145.3,517.2L2113.7,514.3Z" fill="#00dbb0"/><path d="M2105.3,531.0L2070.3,530.2L2037.0,531.8L2003.7,536.0L1975.3,542.1L1950.3,550.1L1928.7,560.0L1910.3,571.8L1894.5,586.0L1887.0,595.0L1880.7,604.3L1875.4,614.3L1871.2,624.3L1867.7,636.0L1865.4,647.7L1864.2,659.3L1864.1,671.0L1865.1,682.7L1867.3,694.3L1870.6,706.0L1874.6,716.0L1879.7,726.0L1886.3,736.0L1893.0,744.3L1901.2,752.7L1916.0,764.3L1933.1,774.3L1952.3,782.7L1973.7,789.5L1998.7,795.1L2027.0,799.2L2055.3,801.4L2085.3,801.8L2113.7,800.5L2142.0,797.3L2168.7,792.4L2192.0,786.0L2212.0,778.5L2230.3,769.2L2247.0,757.7L2259.5,746.0L2272.0,729.7L2280.9,712.7L2286.7,694.3L2289.7,674.3L2289.3,652.7L2285.5,632.7L2278.6,614.3L2268.7,597.3L2257.0,583.4L2242.7,571.0L2227.0,560.9L2207.0,551.4L2185.3,543.9L2160.3,537.8L2133.7,533.6L2105.3,531.0Z" fill="#00e5ff"/><path d="M2090.3,549.3L2062.0,549.3L2033.7,551.6L2007.0,555.9L1983.7,561.9L1963.4,569.3L1944.0,579.3L1927.9,591.0L1915.3,603.6L1904.5,619.3L1897.0,636.7L1894.5,646.0L1893.0,656.0L1892.8,674.3L1896.2,692.7L1899.7,702.7L1903.6,711.0L1913.7,726.4L1927.9,741.0L1941.4,751.0L1957.0,759.7L1975.3,767.3L1995.3,773.4L2017.0,778.0L2042.0,781.3L2067.0,782.8L2092.0,782.7L2117.0,780.8L2140.3,777.4L2162.0,772.5L2182.0,766.1L2200.3,758.1L2215.2,749.3L2228.0,739.3L2238.7,728.4L2248.6,714.3L2255.6,699.3L2260.1,682.7L2261.5,666.0L2260.1,649.3L2255.6,632.7L2248.6,617.7L2239.3,604.3L2228.0,592.7L2215.2,582.7L2200.3,573.9L2182.0,565.9L2161.5,559.3L2139.0,554.3L2115.3,551.0L2090.3,549.3Z" fill="#00b0ff"/><path d="M2105.3,572.5L2083.7,571.1L2060.3,571.6L2038.7,573.7L2017.0,577.8L1997.0,583.7L1980.3,590.6L1965.1,599.3L1952.4,609.3L1941.7,621.0L1933.5,634.3L1928.6,647.7L1926.3,662.7L1927.1,677.7L1930.7,691.0L1937.2,704.3L1947.0,717.3L1957.0,726.6L1968.7,734.9L1982.0,742.2L1997.0,748.3L2013.7,753.4L2032.0,757.2L2050.3,759.7L2070.3,760.9L2090.3,760.6L2110.3,758.9L2128.8,756.0L2147.0,751.6L2163.2,746.0L2177.7,739.3L2190.3,731.7L2201.6,722.7L2211.0,712.7L2218.7,701.0L2223.9,689.3L2227.1,676.0L2227.7,662.7L2226.2,651.0L2222.0,637.7L2215.8,626.0L2208.1,616.0L2197.8,606.0L2186.3,597.7L2173.7,590.6L2158.7,584.3L2142.0,579.1L2123.7,575.0L2105.3,572.5Z" fill="#0070ff"/><path d="M2078.7,599.3L2063.7,599.8L2048.7,601.5L2033.7,604.7L2020.3,608.9L2007.9,614.3L1997.0,620.9L1988.6,627.7L1981.0,636.0L1975.7,644.3L1971.8,654.3L1970.4,664.3L1971.1,674.3L1974.1,684.3L1978.6,692.7L1985.2,701.0L1993.7,708.6L2002.0,714.4L2012.0,719.6L2023.7,724.3L2035.3,727.8L2048.7,730.5L2062.0,732.1L2075.3,732.7L2090.3,732.2L2115.3,728.5L2127.0,725.4L2139.0,721.0L2149.2,716.0L2158.7,709.9L2167.0,702.8L2173.0,696.0L2178.3,687.7L2181.7,679.3L2183.4,671.0L2183.6,662.7L2182.2,654.3L2178.7,645.1L2173.7,636.9L2167.2,629.3L2160.3,623.4L2152.0,617.6L2142.0,612.4L2130.3,607.7L2118.7,604.2L2105.3,601.5L2078.7,599.3Z" fill="#0010ff"/><rect x="1702" y="416" width="750" height="500" fill="url(#gShade1)"/></g>
<rect x="1701.3" y="416.0" width="2.6" height="501.5" fill="#000"/>
<rect x="1701.3" y="915.8" width="751.5" height="2.2" fill="#000"/>
<text x="1703.0" y="394.0" font-size="31" fill="#000" text-anchor="middle">y</text>
<text x="1690.0" y="929.0" font-size="31" fill="#000" text-anchor="end" textLength="15.9" lengthAdjust="spacingAndGlyphs">0</text>
<text x="1690.0" y="866.5" font-size="31" fill="#000" text-anchor="end" textLength="39.6" lengthAdjust="spacingAndGlyphs">0.5</text>
<text x="1690.0" y="804.0" font-size="31" fill="#000" text-anchor="end" textLength="15.9" lengthAdjust="spacingAndGlyphs">1</text>
<text x="1690.0" y="741.5" font-size="31" fill="#000" text-anchor="end" textLength="39.6" lengthAdjust="spacingAndGlyphs">1.5</text>
<text x="1690.0" y="679.0" font-size="31" fill="#000" text-anchor="end" textLength="15.9" lengthAdjust="spacingAndGlyphs">2</text>
<text x="1690.0" y="616.5" font-size="31" fill="#000" text-anchor="end" textLength="39.6" lengthAdjust="spacingAndGlyphs">2.5</text>
<text x="1690.0" y="554.0" font-size="31" fill="#000" text-anchor="end" textLength="15.9" lengthAdjust="spacingAndGlyphs">3</text>
<text x="1690.0" y="491.5" font-size="31" fill="#000" text-anchor="end" textLength="39.6" lengthAdjust="spacingAndGlyphs">3.5</text>
<text x="1690.0" y="429.0" font-size="31" fill="#000" text-anchor="end" textLength="15.9" lengthAdjust="spacingAndGlyphs">4</text>
<text x="1702.5" y="950.0" font-size="31" fill="#000" text-anchor="middle" textLength="15.9" lengthAdjust="spacingAndGlyphs">0</text>
<text x="1765.0" y="950.0" font-size="31" fill="#000" text-anchor="middle" textLength="39.6" lengthAdjust="spacingAndGlyphs">0.5</text>
<text x="1827.5" y="950.0" font-size="31" fill="#000" text-anchor="middle" textLength="15.9" lengthAdjust="spacingAndGlyphs">1</text>
<text x="1890.0" y="950.0" font-size="31" fill="#000" text-anchor="middle" textLength="39.6" lengthAdjust="spacingAndGlyphs">1.5</text>
<text x="1952.5" y="950.0" font-size="31" fill="#000" text-anchor="middle" textLength="15.9" lengthAdjust="spacingAndGlyphs">2</text>
<text x="2015.0" y="950.0" font-size="31" fill="#000" text-anchor="middle" textLength="39.6" lengthAdjust="spacingAndGlyphs">2.5</text>
<text x="2077.5" y="950.0" font-size="31" fill="#000" text-anchor="middle" textLength="15.9" lengthAdjust="spacingAndGlyphs">3</text>
<text x="2140.0" y="950.0" font-size="31" fill="#000" text-anchor="middle" textLength="39.6" lengthAdjust="spacingAndGlyphs">3.5</text>
<text x="2202.5" y="950.0" font-size="31" fill="#000" text-anchor="middle" textLength="15.9" lengthAdjust="spacingAndGlyphs">4</text>
<text x="2265.0" y="950.0" font-size="31" fill="#000" text-anchor="middle" textLength="39.6" lengthAdjust="spacingAndGlyphs">4.5</text>
<text x="2327.5" y="950.0" font-size="31" fill="#000" text-anchor="middle" textLength="15.9" lengthAdjust="spacingAndGlyphs">5</text>
<text x="2390.0" y="950.0" font-size="31" fill="#000" text-anchor="middle" textLength="39.6" lengthAdjust="spacingAndGlyphs">5.5</text>
<text x="2452.5" y="950.0" font-size="31" fill="#000" text-anchor="middle" textLength="15.9" lengthAdjust="spacingAndGlyphs">6</text>
<text x="2471.5" y="916.0" font-size="31" fill="#000" text-anchor="middle">x</text>
<rect x="2489.8" y="416.00" width="19" height="42.17" fill="#ff1a00"/>
<rect x="2489.8" y="457.67" width="19" height="42.17" fill="#ff8000"/>
<rect x="2489.8" y="499.33" width="19" height="42.17" fill="#ffcc00"/>
<rect x="2489.8" y="541.00" width="19" height="42.17" fill="#f2e600"/>
<rect x="2489.8" y="582.67" width="19" height="42.17" fill="#b3e000"/>
<rect x="2489.8" y="624.33" width="19" height="42.17" fill="#55dd00"/>
<rect x="2489.8" y="666.00" width="19" height="42.17" fill="#00cc44"/>
<rect x="2489.8" y="707.67" width="19" height="42.17" fill="#00dbb0"/>
<rect x="2489.8" y="749.33" width="19" height="42.17" fill="#00e5ff"/>
<rect x="2489.8" y="791.00" width="19" height="42.17" fill="#00b0ff"/>
<rect x="2489.8" y="832.67" width="19" height="42.17" fill="#0070ff"/>
<rect x="2489.8" y="874.33" width="19" height="42.17" fill="#0010ff"/>
<rect x="2489.8" y="416.5" width="19" height="499.5" fill="none" stroke="#000" stroke-width="2.4"/>
<text x="2520.0" y="428.5" font-size="31" fill="#000" textLength="15.9" lengthAdjust="spacingAndGlyphs">0</text>
<text x="2520.0" y="470.2" font-size="31" fill="#000" textLength="80.9" lengthAdjust="spacingAndGlyphs">-0.552</text>
<text x="2520.0" y="511.8" font-size="31" fill="#000" textLength="49.1" lengthAdjust="spacingAndGlyphs">-1.1</text>
<text x="2520.0" y="553.5" font-size="31" fill="#000" textLength="65.0" lengthAdjust="spacingAndGlyphs">-1.66</text>
<text x="2520.0" y="595.2" font-size="31" fill="#000" textLength="65.0" lengthAdjust="spacingAndGlyphs">-2.21</text>
<text x="2520.0" y="636.8" font-size="31" fill="#000" textLength="65.0" lengthAdjust="spacingAndGlyphs">-2.76</text>
<text x="2520.0" y="678.5" font-size="31" fill="#000" textLength="65.0" lengthAdjust="spacingAndGlyphs">-3.31</text>
<text x="2520.0" y="720.2" font-size="31" fill="#000" textLength="65.0" lengthAdjust="spacingAndGlyphs">-3.87</text>
<text x="2520.0" y="761.8" font-size="31" fill="#000" textLength="65.0" lengthAdjust="spacingAndGlyphs">-4.42</text>
<text x="2520.0" y="803.5" font-size="31" fill="#000" textLength="65.0" lengthAdjust="spacingAndGlyphs">-4.97</text>
<text x="2520.0" y="845.2" font-size="31" fill="#000" textLength="65.0" lengthAdjust="spacingAndGlyphs">-5.52</text>
<text x="2520.0" y="886.8" font-size="31" fill="#000" textLength="65.0" lengthAdjust="spacingAndGlyphs">-6.07</text>
<text x="2520.0" y="928.5" font-size="31" fill="#000" textLength="65.0" lengthAdjust="spacingAndGlyphs">-6.63</text>
<text x="2570.8" y="369.0" font-size="28" fill="#808080" textLength="62.0" lengthAdjust="spacingAndGlyphs">[6; 4]</text>
<text x="1597.0" y="980.0" font-size="28" fill="#808080" textLength="60.7" lengthAdjust="spacingAndGlyphs">[0; 0]</text>
<text x="1592.1" y="1066.0" font-size="38" fill="#000" textLength="276.8" lengthAdjust="spacingAndGlyphs">Maximum value -</text>
<text x="1881.6" y="1066.0" font-size="40" fill="#1565dc" font-family='"Liberation Serif", serif' font-style="italic" textLength="30.5" lengthAdjust="spacingAndGlyphs">w</text>
<path d="M1929.8,1014.5 Q1908.8,1057.5 1929.8,1100.5 L1929.5,1100.0 Q1915.9,1057.5 1929.5,1015.0 Z" fill="#000"/>
<text x="1944.0" y="1044.0" font-size="40" fill="#1565dc" font-family='"Liberation Serif", serif' font-style="italic" textLength="18.0" lengthAdjust="spacingAndGlyphs">a</text>
<rect x="1941.8" y="1055.5" width="21.9" height="2.7" fill="#000"/>
<text x="1952.8" y="1094.3" font-size="38" fill="#000" font-family='"Liberation Serif", serif' text-anchor="middle">2</text>
<text x="1974.0" y="1066.0" font-size="38" fill="#000" font-family='"Liberation Serif", serif'>;</text>
<text x="1998.0" y="1044.0" font-size="40" fill="#1565dc" font-family='"Liberation Serif", serif' font-style="italic" textLength="22.0" lengthAdjust="spacingAndGlyphs">b</text>
<rect x="1997.9" y="1055.5" width="20.9" height="2.7" fill="#000"/>
<text x="2008.4" y="1094.3" font-size="38" fill="#000" font-family='"Liberation Serif", serif' text-anchor="middle">2</text>
<path d="M2028.3,1014.5 Q2051.3,1057.5 2028.3,1100.5 L2028.6,1100.0 Q2044.2,1057.5 2028.6,1015.0 Z" fill="#000"/>
<text x="2059.7" y="1066.0" font-size="38" fill="#000" font-family='"Liberation Serif", serif' textLength="19.0" lengthAdjust="spacingAndGlyphs">=</text>
<text x="2091.8" y="1066.0" font-size="40" fill="#1565dc" font-family='"Liberation Serif", serif' font-style="italic" textLength="28.3" lengthAdjust="spacingAndGlyphs">w</text>
<path d="M2141.9,1014.5 Q2114.9,1057.5 2141.9,1100.5 L2141.6,1100.0 Q2122.0,1057.5 2141.6,1015.0 Z" fill="#000"/>
<text x="2152.0" y="1044.7" font-size="38" fill="#000" font-family='"Liberation Serif", serif' textLength="18.8" lengthAdjust="spacingAndGlyphs">6</text>
<text x="2180.4" y="1044.7" font-size="38" fill="#117a65" font-family='"Liberation Serif", serif' textLength="26.9" lengthAdjust="spacingAndGlyphs">m</text>
<rect x="2151" y="1055.9" width="57" height="2.9" fill="#000"/>
<text x="2179.5" y="1095.4" font-size="38" fill="#000" font-family='"Liberation Serif", serif' text-anchor="middle">2</text>
<text x="2218.0" y="1066.0" font-size="38" fill="#000" font-family='"Liberation Serif", serif'>;</text>
<text x="2242.7" y="1044.7" font-size="38" fill="#000" font-family='"Liberation Serif", serif' textLength="18.7" lengthAdjust="spacingAndGlyphs">4</text>
<text x="2271.0" y="1044.7" font-size="38" fill="#117a65" font-family='"Liberation Serif", serif' textLength="26.9" lengthAdjust="spacingAndGlyphs">m</text>
<rect x="2242" y="1055.9" width="57" height="2.9" fill="#000"/>
<text x="2270.4" y="1095.4" font-size="38" fill="#000" font-family='"Liberation Serif", serif' text-anchor="middle">2</text>
<path d="M2308.6,1014.5 Q2333.4,1057.5 2308.6,1100.5 L2308.9,1100.0 Q2326.3,1057.5 2308.9,1015.0 Z" fill="#000"/>
<text x="2340.4" y="1066.0" font-size="38" fill="#000" font-family='"Liberation Serif", serif' textLength="19.3" lengthAdjust="spacingAndGlyphs">=</text>
<text x="2371.2" y="1066.0" font-size="38" fill="#000" font-family='"Liberation Serif", serif' textLength="69.4" lengthAdjust="spacingAndGlyphs">6.63</text>
<text x="2450.2" y="1066.0" font-size="38" fill="#117a65" font-family='"Liberation Serif", serif' textLength="56.5" lengthAdjust="spacingAndGlyphs">mm</text>
<text x="1591.5" y="1156.5" font-size="38" fill="#000" textLength="519.5" lengthAdjust="spacingAndGlyphs">Bending moments - Mx, kNm/m</text>
<defs><linearGradient id="gShade2" x1="0" y1="0" x2="0" y2="1"><stop offset="0.2" stop-color="#000" stop-opacity="0"/><stop offset="0.5" stop-color="#000" stop-opacity="0.12"/><stop offset="0.75" stop-color="#000" stop-opacity="0.3"/><stop offset="1" stop-color="#000" stop-opacity="0.62"/></linearGradient></defs>
<g clip-path="url(#clipPlot2)"><rect x="1702" y="1254.5" width="750" height="500" fill="#0010ff"/><path d="M2303.7,1267.8L2222.0,1266.5L1937.0,1266.5L1817.0,1268.6L1785.3,1270.1L1764.3,1272.8L1748.7,1277.2L1737.0,1283.7L1730.3,1290.4L1724.9,1299.5L1720.7,1311.2L1717.5,1326.2L1715.0,1346.2L1713.1,1371.2L1710.9,1441.2L1710.8,1562.8L1711.9,1611.2L1713.8,1647.8L1716.3,1674.5L1719.5,1692.8L1724.2,1707.8L1730.3,1718.6L1737.0,1725.3L1747.0,1731.1L1758.7,1734.9L1773.7,1737.7L1810.3,1740.2L1917.0,1742.4L2225.3,1742.5L2343.7,1740.2L2370.3,1738.7L2390.3,1736.0L2405.3,1731.8L2417.0,1725.3L2422.9,1719.5L2427.4,1712.8L2431.2,1704.5L2434.5,1692.8L2438.8,1664.5L2441.8,1619.5L2443.6,1521.2L2442.6,1416.2L2439.6,1352.8L2437.2,1331.2L2434.1,1314.5L2429.8,1301.2L2423.7,1290.4L2415.3,1282.5L2403.7,1276.6L2389.7,1272.8L2370.3,1270.3L2347.0,1268.9L2303.7,1267.8Z" fill="#0070ff"/><path d="M2258.7,1279.5L2220.3,1278.7L2075.3,1278.4L1932.0,1278.7L1885.3,1279.9L1818.7,1282.9L1790.3,1285.6L1778.7,1287.8L1767.7,1291.2L1758.7,1295.3L1752.0,1299.8L1743.7,1308.4L1737.0,1319.5L1732.0,1332.8L1728.0,1349.5L1724.7,1371.2L1722.0,1399.0L1719.2,1471.2L1719.0,1517.8L1719.8,1564.5L1721.5,1602.8L1724.1,1632.8L1727.4,1656.2L1732.0,1676.2L1737.8,1691.2L1745.3,1702.7L1753.7,1710.4L1763.6,1716.2L1775.3,1720.3L1790.3,1723.4L1827.0,1726.5L1928.7,1730.3L2222.0,1730.3L2313.7,1727.2L2348.7,1725.1L2372.0,1721.9L2388.7,1716.9L2395.3,1713.7L2402.0,1709.2L2408.7,1702.7L2414.4,1694.5L2419.1,1684.5L2423.4,1671.2L2426.6,1656.2L2429.3,1637.8L2433.1,1591.2L2435.1,1506.2L2433.3,1421.2L2431.4,1391.2L2428.7,1366.2L2425.3,1346.2L2420.9,1329.5L2415.3,1316.2L2407.0,1304.5L2396.7,1296.2L2382.0,1289.7L2367.0,1286.1L2347.0,1283.7L2258.7,1279.5Z" fill="#00b0ff"/><path d="M2110.3,1291.2L1923.7,1291.4L1887.0,1293.0L1827.0,1297.3L1800.3,1300.6L1782.0,1305.4L1773.7,1309.1L1767.5,1312.8L1757.0,1322.3L1749.8,1332.8L1743.2,1347.8L1738.0,1366.2L1733.8,1389.5L1730.9,1416.2L1728.9,1449.5L1727.9,1487.8L1727.9,1526.2L1729.0,1561.2L1730.9,1592.8L1733.6,1617.8L1737.3,1639.5L1742.1,1657.8L1748.1,1672.8L1755.3,1684.5L1763.2,1692.8L1770.3,1698.0L1778.7,1702.3L1788.7,1705.7L1800.3,1708.4L1828.7,1711.9L1895.3,1716.5L1940.3,1717.8L2220.3,1717.7L2283.7,1714.9L2328.7,1711.6L2352.0,1708.7L2367.0,1705.2L2378.7,1700.7L2388.7,1694.6L2397.0,1686.7L2404.2,1676.2L2410.2,1662.8L2414.8,1647.8L2418.7,1629.1L2421.8,1606.2L2423.9,1581.2L2426.2,1514.5L2424.8,1442.8L2422.9,1414.5L2420.2,1389.5L2416.7,1369.5L2412.0,1351.4L2406.7,1337.8L2400.0,1326.2L2390.3,1315.7L2384.0,1311.2L2377.0,1307.5L2362.0,1302.4L2340.3,1298.6L2283.7,1294.1L2238.7,1291.7L2110.3,1291.2Z" fill="#00e5ff"/><path d="M2222.0,1304.5L2148.7,1304.8L2073.7,1303.8L2005.3,1304.8L1938.7,1304.4L1905.3,1305.5L1848.7,1310.6L1813.7,1315.3L1802.0,1318.0L1792.0,1321.4L1783.7,1325.4L1775.3,1331.1L1766.9,1339.5L1759.1,1351.2L1753.1,1364.5L1747.9,1381.2L1743.8,1401.2L1740.9,1422.8L1738.6,1451.2L1737.3,1482.8L1737.1,1516.2L1738.2,1549.5L1740.3,1580.6L1743.5,1606.2L1747.5,1626.2L1753.1,1644.5L1759.1,1657.8L1766.9,1669.5L1775.3,1677.9L1785.3,1684.5L1797.0,1689.4L1810.3,1693.0L1833.7,1696.7L1877.0,1701.2L1907.0,1703.6L1935.3,1704.6L2005.3,1704.2L2082.0,1705.1L2148.7,1704.2L2215.3,1704.6L2248.7,1703.5L2305.3,1698.4L2340.3,1693.7L2352.0,1691.0L2362.0,1687.6L2370.3,1683.6L2378.7,1677.9L2387.0,1669.7L2393.0,1661.2L2398.7,1650.2L2403.7,1636.5L2407.7,1621.2L2410.8,1604.5L2415.2,1561.2L2416.6,1529.5L2417.0,1497.8L2416.2,1466.2L2414.3,1436.2L2411.9,1412.8L2408.7,1392.6L2404.3,1374.5L2398.9,1359.5L2390.9,1344.5L2382.0,1334.0L2370.3,1325.4L2355.3,1319.0L2337.0,1314.7L2308.7,1311.0L2258.7,1306.2L2222.0,1304.5Z" fill="#00dbb0"/><path d="M2100.3,1317.8L2067.0,1317.6L2003.7,1318.7L1935.3,1318.4L1910.3,1319.5L1883.7,1322.0L1838.7,1328.3L1812.0,1334.3L1802.0,1338.0L1793.7,1342.2L1785.6,1347.8L1778.7,1354.4L1770.3,1365.7L1764.2,1377.8L1758.8,1392.8L1754.8,1409.5L1751.3,1431.2L1748.8,1456.2L1747.3,1484.5L1747.0,1511.2L1747.9,1539.5L1749.9,1566.2L1752.9,1589.5L1756.6,1607.8L1761.6,1624.5L1767.0,1637.3L1773.7,1648.4L1782.0,1658.0L1790.0,1664.5L1798.7,1669.5L1808.7,1673.6L1820.3,1677.0L1858.7,1683.8L1907.0,1689.2L1940.3,1690.7L2005.3,1690.3L2072.0,1691.4L2148.7,1690.3L2208.7,1690.7L2237.0,1689.9L2263.7,1687.7L2302.0,1682.8L2328.7,1678.2L2343.7,1674.2L2355.3,1669.5L2366.3,1662.8L2375.3,1654.6L2382.9,1644.5L2389.1,1632.8L2394.1,1619.5L2398.7,1602.3L2402.1,1582.8L2404.7,1559.5L2406.3,1534.5L2407.0,1507.8L2406.6,1481.2L2405.1,1454.5L2402.5,1429.5L2399.2,1409.5L2395.3,1393.4L2390.3,1379.0L2383.9,1366.2L2377.0,1356.3L2370.4,1349.5L2364.0,1344.5L2357.0,1340.4L2347.5,1336.2L2327.0,1330.5L2293.7,1325.0L2257.0,1320.6L2227.0,1318.6L2147.0,1318.7L2100.3,1317.8Z" fill="#00cc44"/><path d="M2115.3,1332.8L2075.3,1332.2L2005.3,1333.5L1943.7,1333.2L1922.0,1333.9L1902.0,1335.6L1862.0,1341.6L1828.7,1349.2L1817.8,1352.8L1808.7,1357.0L1800.3,1362.0L1793.0,1367.8L1785.3,1376.2L1777.8,1387.8L1772.0,1400.8L1767.7,1414.5L1764.0,1431.2L1761.0,1451.2L1758.9,1474.5L1758.0,1497.8L1758.3,1522.8L1759.8,1546.2L1762.3,1567.8L1766.0,1587.8L1770.3,1603.5L1775.3,1616.2L1782.0,1628.2L1789.6,1637.8L1796.9,1644.5L1803.7,1649.2L1812.0,1653.7L1822.4,1657.8L1848.7,1664.8L1888.7,1671.7L1912.0,1674.4L1935.3,1675.7L2007.0,1675.5L2072.0,1676.8L2148.7,1675.5L2215.3,1675.7L2237.0,1674.7L2258.7,1672.6L2297.0,1666.5L2327.0,1659.3L2337.0,1655.8L2347.0,1651.2L2354.9,1646.2L2361.0,1641.2L2368.7,1632.8L2375.3,1622.7L2380.8,1611.2L2385.4,1597.8L2389.4,1581.2L2392.4,1562.8L2394.6,1541.2L2395.8,1517.8L2395.9,1494.5L2394.9,1471.2L2392.8,1449.5L2389.7,1429.5L2385.9,1412.8L2381.5,1399.5L2375.3,1386.3L2368.7,1376.2L2362.0,1368.8L2355.3,1363.2L2347.0,1357.9L2338.7,1353.9L2317.0,1346.9L2283.7,1340.1L2253.7,1335.8L2225.3,1333.6L2115.3,1332.8Z" fill="#55dd00"/><path d="M2218.7,1349.4L2147.0,1349.3L2075.3,1347.9L2007.0,1349.3L1947.0,1349.1L1925.3,1350.0L1895.3,1353.3L1862.0,1360.1L1835.9,1367.8L1817.0,1376.6L1808.0,1382.8L1800.3,1389.9L1793.7,1398.3L1787.2,1409.5L1782.3,1421.2L1778.3,1434.5L1775.2,1449.5L1772.7,1466.2L1771.1,1486.2L1770.6,1507.8L1771.4,1527.8L1773.4,1547.8L1776.4,1566.2L1780.2,1581.2L1784.9,1594.5L1790.8,1606.2L1798.7,1617.2L1808.7,1626.7L1820.3,1634.3L1835.3,1641.0L1857.0,1647.7L1883.7,1653.6L1908.7,1657.5L1932.0,1659.4L2008.7,1659.7L2078.7,1661.1L2147.0,1659.7L2207.0,1659.9L2228.7,1659.0L2258.7,1655.7L2292.0,1648.9L2318.1,1641.2L2337.0,1632.4L2345.3,1626.7L2353.2,1619.5L2360.0,1611.2L2365.3,1602.4L2370.3,1591.4L2374.3,1579.5L2380.2,1551.2L2382.3,1532.8L2383.3,1514.5L2383.3,1496.2L2382.3,1476.2L2380.2,1457.8L2377.2,1441.2L2373.7,1427.3L2369.1,1414.5L2362.0,1400.8L2352.0,1388.2L2340.3,1378.7L2325.3,1370.7L2303.7,1363.2L2274.5,1356.2L2247.0,1351.7L2218.7,1349.4Z" fill="#b3e000"/><path d="M2128.7,1366.1L2070.3,1364.9L2007.0,1366.6L1947.0,1366.6L1920.3,1368.2L1893.7,1372.4L1866.6,1379.5L1843.7,1388.2L1826.5,1397.8L1818.7,1404.0L1811.7,1411.2L1805.3,1419.7L1799.9,1429.5L1795.3,1440.7L1791.7,1452.8L1788.9,1466.2L1786.9,1481.2L1785.8,1497.8L1785.9,1512.8L1787.0,1529.0L1789.2,1544.5L1792.2,1557.8L1796.4,1571.2L1801.6,1582.8L1807.0,1591.8L1816.4,1602.8L1827.0,1611.5L1840.3,1619.2L1856.8,1626.2L1878.0,1632.8L1900.3,1637.9L1922.0,1640.9L1945.3,1642.4L2007.0,1642.4L2080.3,1644.1L2147.0,1642.4L2205.3,1642.4L2230.3,1641.1L2262.0,1636.2L2292.0,1628.0L2305.3,1623.0L2316.4,1617.8L2325.3,1612.6L2334.0,1606.2L2340.9,1599.5L2347.4,1591.2L2353.3,1581.2L2357.6,1571.2L2361.8,1557.8L2364.8,1544.5L2366.9,1529.5L2368.1,1514.5L2368.2,1499.5L2367.3,1482.8L2365.3,1467.7L2362.3,1452.8L2358.7,1440.7L2354.1,1429.5L2348.7,1419.7L2342.3,1411.2L2335.9,1404.5L2328.7,1398.7L2312.0,1389.0L2288.7,1379.9L2262.0,1372.8L2240.3,1369.0L2217.0,1367.0L2128.7,1366.1Z" fill="#f2e600"/><path d="M2107.0,1384.5L2065.3,1384.0L2007.0,1385.9L1950.3,1386.1L1927.0,1387.6L1905.3,1391.2L1885.3,1396.6L1865.3,1404.5L1848.7,1413.6L1833.7,1425.6L1827.1,1432.8L1822.0,1440.0L1817.0,1448.9L1813.2,1457.8L1810.0,1467.8L1807.5,1479.5L1805.4,1502.8L1805.8,1516.2L1807.2,1527.8L1809.6,1539.5L1813.2,1551.2L1817.5,1561.2L1822.3,1569.5L1831.4,1581.2L1842.7,1591.2L1855.5,1599.5L1873.0,1607.8L1892.0,1614.5L1912.0,1619.2L1932.0,1621.9L1953.7,1623.0L2005.3,1623.1L2080.3,1625.1L2147.0,1623.1L2203.7,1622.9L2228.7,1621.2L2243.7,1618.9L2257.0,1615.8L2272.0,1611.3L2285.0,1606.2L2297.0,1600.3L2307.0,1594.3L2315.5,1587.8L2323.7,1580.0L2330.3,1571.6L2335.3,1563.3L2339.5,1554.5L2343.0,1544.5L2345.9,1532.8L2347.7,1521.2L2348.5,1497.8L2345.6,1474.5L2339.5,1454.5L2335.3,1445.7L2330.3,1437.4L2324.1,1429.5L2317.4,1422.8L2303.7,1412.6L2285.0,1402.8L2263.7,1395.0L2242.0,1389.8L2225.3,1387.4L2207.0,1386.2L2147.0,1385.9L2107.0,1384.5Z" fill="#ffcc00"/><path d="M2090.3,1406.2L2063.3,1406.2L2007.0,1408.6L1955.3,1409.1L1937.0,1410.2L1922.0,1412.5L1907.0,1416.2L1893.3,1421.2L1880.3,1427.5L1865.1,1437.8L1853.1,1449.5L1843.7,1463.1L1837.0,1478.8L1833.6,1496.2L1833.6,1512.8L1837.0,1530.2L1843.8,1546.2L1849.1,1554.5L1856.1,1562.8L1863.1,1569.5L1871.8,1576.2L1882.0,1582.4L1892.0,1587.3L1913.7,1594.7L1930.3,1597.9L1948.7,1599.7L2007.0,1600.4L2072.0,1603.0L2148.7,1600.4L2202.0,1599.8L2220.3,1598.4L2235.3,1595.9L2257.0,1589.4L2277.0,1579.5L2286.8,1572.8L2294.6,1566.2L2300.9,1559.5L2307.0,1551.4L2314.9,1536.2L2319.3,1521.2L2320.8,1502.8L2318.9,1486.2L2313.7,1469.8L2306.0,1456.2L2295.3,1443.6L2282.0,1432.7L2268.7,1424.9L2255.3,1419.0L2240.3,1414.3L2223.7,1411.1L2200.3,1409.1L2147.0,1408.6L2090.3,1406.2Z" fill="#ff8000"/><path d="M2113.7,1436.1L2088.7,1434.7L2068.7,1434.6L2007.0,1438.3L1958.7,1439.5L1938.7,1441.6L1920.3,1446.4L1907.0,1452.6L1897.0,1459.5L1888.4,1467.8L1881.3,1477.8L1876.9,1487.8L1874.4,1499.5L1874.6,1511.2L1877.4,1522.8L1880.4,1529.5L1885.3,1537.4L1890.3,1543.3L1897.0,1549.5L1903.9,1554.5L1912.0,1559.0L1928.7,1565.2L1941.3,1567.8L1955.3,1569.3L2007.0,1570.7L2068.7,1574.4L2095.3,1574.0L2150.3,1570.6L2195.3,1569.5L2218.7,1566.8L2235.3,1562.0L2250.1,1554.5L2262.5,1544.5L2271.7,1532.8L2276.6,1522.8L2279.4,1511.2L2279.6,1499.5L2277.7,1489.5L2273.6,1479.5L2267.0,1469.5L2258.7,1460.9L2248.7,1453.6L2240.3,1449.2L2230.3,1445.3L2210.3,1440.8L2193.7,1439.4L2148.7,1438.4L2113.7,1436.1Z" fill="#ff1a00"/><rect x="1702" y="1254.5" width="750" height="500" fill="url(#gShade2)"/></g>
<rect x="1701.3" y="1254.5" width="2.6" height="501.5" fill="#000"/>
<rect x="1701.3" y="1754.3" width="751.5" height="2.2" fill="#000"/>
<text x="1703.0" y="1232.5" font-size="31" fill="#000" text-anchor="middle">y</text>
<text x="1690.0" y="1767.5" font-size="31" fill="#000" text-anchor="end" textLength="15.9" lengthAdjust="spacingAndGlyphs">0</text>
<text x="1690.0" y="1705.0" font-size="31" fill="#000" text-anchor="end" textLength="39.6" lengthAdjust="spacingAndGlyphs">0.5</text>
<text x="1690.0" y="1642.5" font-size="31" fill="#000" text-anchor="end" textLength="15.9" lengthAdjust="spacingAndGlyphs">1</text>
<text x="1690.0" y="1580.0" font-size="31" fill="#000" text-anchor="end" textLength="39.6" lengthAdjust="spacingAndGlyphs">1.5</text>
<text x="1690.0" y="1517.5" font-size="31" fill="#000" text-anchor="end" textLength="15.9" lengthAdjust="spacingAndGlyphs">2</text>
<text x="1690.0" y="1455.0" font-size="31" fill="#000" text-anchor="end" textLength="39.6" lengthAdjust="spacingAndGlyphs">2.5</text>
<text x="1690.0" y="1392.5" font-size="31" fill="#000" text-anchor="end" textLength="15.9" lengthAdjust="spacingAndGlyphs">3</text>
<text x="1690.0" y="1330.0" font-size="31" fill="#000" text-anchor="end" textLength="39.6" lengthAdjust="spacingAndGlyphs">3.5</text>
<text x="1690.0" y="1267.5" font-size="31" fill="#000" text-anchor="end" textLength="15.9" lengthAdjust="spacingAndGlyphs">4</text>
<text x="1702.5" y="1788.5" font-size="31" fill="#000" text-anchor="middle" textLength="15.9" lengthAdjust="spacingAndGlyphs">0</text>
<text x="1765.0" y="1788.5" font-size="31" fill="#000" text-anchor="middle" textLength="39.6" lengthAdjust="spacingAndGlyphs">0.5</text>
<text x="1827.5" y="1788.5" font-size="31" fill="#000" text-anchor="middle" textLength="15.9" lengthAdjust="spacingAndGlyphs">1</text>
<text x="1890.0" y="1788.5" font-size="31" fill="#000" text-anchor="middle" textLength="39.6" lengthAdjust="spacingAndGlyphs">1.5</text>
<text x="1952.5" y="1788.5" font-size="31" fill="#000" text-anchor="middle" textLength="15.9" lengthAdjust="spacingAndGlyphs">2</text>
<text x="2015.0" y="1788.5" font-size="31" fill="#000" text-anchor="middle" textLength="39.6" lengthAdjust="spacingAndGlyphs">2.5</text>
<text x="2077.5" y="1788.5" font-size="31" fill="#000" text-anchor="middle" textLength="15.9" lengthAdjust="spacingAndGlyphs">3</text>
<text x="2140.0" y="1788.5" font-size="31" fill="#000" text-anchor="middle" textLength="39.6" lengthAdjust="spacingAndGlyphs">3.5</text>
<text x="2202.5" y="1788.5" font-size="31" fill="#000" text-anchor="middle" textLength="15.9" lengthAdjust="spacingAndGlyphs">4</text>
<text x="2265.0" y="1788.5" font-size="31" fill="#000" text-anchor="middle" textLength="39.6" lengthAdjust="spacingAndGlyphs">4.5</text>
<text x="2327.5" y="1788.5" font-size="31" fill="#000" text-anchor="middle" textLength="15.9" lengthAdjust="spacingAndGlyphs">5</text>
<text x="2390.0" y="1788.5" font-size="31" fill="#000" text-anchor="middle" textLength="39.6" lengthAdjust="spacingAndGlyphs">5.5</text>
<text x="2452.5" y="1788.5" font-size="31" fill="#000" text-anchor="middle" textLength="15.9" lengthAdjust="spacingAndGlyphs">6</text>
<text x="2471.5" y="1754.5" font-size="31" fill="#000" text-anchor="middle">x</text>
<rect x="2489.8" y="1254.50" width="19" height="42.17" fill="#ff1a00"/>
<rect x="2489.8" y="1296.17" width="19" height="42.17" fill="#ff8000"/>
<rect x="2489.8" y="1337.83" width="19" height="42.17" fill="#ffcc00"/>
<rect x="2489.8" y="1379.50" width="19" height="42.17" fill="#f2e600"/>
<rect x="2489.8" y="1421.17" width="19" height="42.17" fill="#b3e000"/>
<rect x="2489.8" y="1462.83" width="19" height="42.17" fill="#55dd00"/>
<rect x="2489.8" y="1504.50" width="19" height="42.17" fill="#00cc44"/>
<rect x="2489.8" y="1546.17" width="19" height="42.17" fill="#00dbb0"/>
<rect x="2489.8" y="1587.83" width="19" height="42.17" fill="#00e5ff"/>
<rect x="2489.8" y="1629.50" width="19" height="42.17" fill="#00b0ff"/>
<rect x="2489.8" y="1671.17" width="19" height="42.17" fill="#0070ff"/>
<rect x="2489.8" y="1712.83" width="19" height="42.17" fill="#0010ff"/>
<rect x="2489.8" y="1255.0" width="19" height="499.5" fill="none" stroke="#000" stroke-width="2.4"/>
<text x="2520.0" y="1267.0" font-size="31" fill="#000" textLength="55.5" lengthAdjust="spacingAndGlyphs">6.23</text>
<text x="2520.0" y="1308.7" font-size="31" fill="#000" textLength="55.5" lengthAdjust="spacingAndGlyphs">5.71</text>
<text x="2520.0" y="1350.3" font-size="31" fill="#000" textLength="55.5" lengthAdjust="spacingAndGlyphs">5.19</text>
<text x="2520.0" y="1392.0" font-size="31" fill="#000" textLength="55.5" lengthAdjust="spacingAndGlyphs">4.67</text>
<text x="2520.0" y="1433.7" font-size="31" fill="#000" textLength="55.5" lengthAdjust="spacingAndGlyphs">4.16</text>
<text x="2520.0" y="1475.3" font-size="31" fill="#000" textLength="55.5" lengthAdjust="spacingAndGlyphs">3.64</text>
<text x="2520.0" y="1517.0" font-size="31" fill="#000" textLength="55.5" lengthAdjust="spacingAndGlyphs">3.12</text>
<text x="2520.0" y="1558.7" font-size="31" fill="#000" textLength="39.6" lengthAdjust="spacingAndGlyphs">2.6</text>
<text x="2520.0" y="1600.3" font-size="31" fill="#000" textLength="55.5" lengthAdjust="spacingAndGlyphs">2.08</text>
<text x="2520.0" y="1642.0" font-size="31" fill="#000" textLength="55.5" lengthAdjust="spacingAndGlyphs">1.56</text>
<text x="2520.0" y="1683.7" font-size="31" fill="#000" textLength="55.5" lengthAdjust="spacingAndGlyphs">1.04</text>
<text x="2520.0" y="1725.3" font-size="31" fill="#000" textLength="71.4" lengthAdjust="spacingAndGlyphs">0.519</text>
<text x="2520.0" y="1767.0" font-size="31" fill="#000" textLength="15.9" lengthAdjust="spacingAndGlyphs">0</text>
<text x="2570.8" y="1207.5" font-size="28" fill="#808080" textLength="62.0" lengthAdjust="spacingAndGlyphs">[6; 4]</text>
<text x="1597.0" y="1818.5" font-size="28" fill="#808080" textLength="60.7" lengthAdjust="spacingAndGlyphs">[0; 0]</text>
</g>
<text x="24.0" y="1887.2" font-size="30" fill="#000" textLength="77.2" lengthAdjust="spacingAndGlyphs">Round</text>
<rect x="118.3" y="1853" width="72.7" height="52.8" fill="#fff" stroke="#a3a2a6" stroke-width="2"/>
<text x="154.5" y="1888.6" font-size="31" fill="#000" text-anchor="middle" stroke="#000" stroke-width="0.5">2</text>
<rect x="205" y="1851" width="27" height="57.6" fill="#ecebef"/>
<path d="M214.5,1869.5 L220,1864 L225.5,1869.5" fill="none" stroke="#a8a7ab" stroke-width="2.2"/>
<path d="M214.5,1893.5 L220,1899 L225.5,1893.5" fill="none" stroke="#a8a7ab" stroke-width="2.2"/>
<rect x="266.4" y="1861.2" width="31.6" height="29.4" fill="#fff" stroke="#5a5a5e" stroke-width="2.2"/>
<path d="M271.1,1875.9 L279.2,1884.7 L292.3,1865.9" fill="none" stroke="#1a1a1a" stroke-width="4.6"/>
<text x="307.3" y="1887.2" font-size="30" fill="#000" textLength="197.1" lengthAdjust="spacingAndGlyphs">Zero small elem.</text>
<rect x="606.6" y="1861.2" width="31.7" height="29.4" fill="#fff" stroke="#5a5a5e" stroke-width="2.2"/>
<path d="M611.3,1875.9 L619.4,1884.7 L632.6,1865.9" fill="none" stroke="#1a1a1a" stroke-width="4.6"/>
<text x="648.0" y="1887.2" font-size="30" fill="#000" textLength="120.8" lengthAdjust="spacingAndGlyphs">Substitute</text>
<text x="817.0" y="1887.2" font-size="30" fill="#000" textLength="53.5" lengthAdjust="spacingAndGlyphs">Plot:</text>
<rect x="889.0" y="1861.2" width="32.0" height="29.4" fill="#fff" stroke="#5a5a5e" stroke-width="2.2"/>
<path d="M893.8,1875.9 L901.9,1884.7 L915.2,1865.9" fill="none" stroke="#1a1a1a" stroke-width="4.6"/>
<text x="936.5" y="1887.2" font-size="30" fill="#000" textLength="106.9" lengthAdjust="spacingAndGlyphs">Adaptive</text>
<rect x="1067.6" y="1861.2" width="32.0" height="29.4" fill="#fff" stroke="#5a5a5e" stroke-width="2.2"/>
<path d="M1072.4,1875.9 L1080.5,1884.7 L1093.8,1865.9" fill="none" stroke="#1a1a1a" stroke-width="4.6"/>
<text x="1114.4" y="1887.2" font-size="30" fill="#000" textLength="112.6" lengthAdjust="spacingAndGlyphs">Shadows:</text>
<rect x="1243.6" y="1853.7" width="259.4" height="50.3" fill="#f3f2f5" stroke="#a9a8ac" stroke-width="2"/>
<text x="1258.1" y="1889.0" font-size="30.5" fill="#000" textLength="74.0" lengthAdjust="spacingAndGlyphs" stroke="#000" stroke-width="0.9">North</text>
<path d="M1473.5,1871.5 L1480.0,1878.5 L1486.5,1871.5" fill="none" stroke="#4a4a4e" stroke-width="3.2"/>
<text x="1530.0" y="1887.2" font-size="30" fill="#000" textLength="87.0" lengthAdjust="spacingAndGlyphs">Palette:</text>
<rect x="1634.6" y="1853.7" width="245.9" height="50.3" fill="#f3f2f5" stroke="#a9a8ac" stroke-width="2"/>
<text x="1649.1" y="1889.0" font-size="30.5" fill="#000" textLength="110.9" lengthAdjust="spacingAndGlyphs" stroke="#000" stroke-width="0.9">Rainbow</text>
<path d="M1851.0,1871.5 L1857.5,1878.5 L1864.0,1871.5" fill="none" stroke="#4a4a4e" stroke-width="3.2"/>
<rect x="1911.5" y="1861.2" width="31.9" height="30.8" fill="#fff" stroke="#5a5a5e" stroke-width="2.2"/>
<text x="1958.0" y="1887.2" font-size="30" fill="#000" textLength="94.7" lengthAdjust="spacingAndGlyphs">Smooth</text>
<text x="2079.0" y="1887.2" font-size="30" fill="#000" textLength="151.8" lengthAdjust="spacingAndGlyphs">Ext. browser:</text>
<rect x="2247.5" y="1853.7" width="183.7" height="50.3" fill="#f3f2f5" stroke="#a9a8ac" stroke-width="2"/>
<text x="2262.0" y="1889.0" font-size="30.5" fill="#000" textLength="97.0" lengthAdjust="spacingAndGlyphs" stroke="#000" stroke-width="0.9">Chrome</text>
<path d="M2401.7,1871.5 L2408.2,1878.5 L2414.7,1871.5" fill="none" stroke="#4a4a4e" stroke-width="3.2"/>
<text x="2766.6" y="1889.2" font-size="25" fill="#5d5c62" font-weight="bold" textLength="82.4" lengthAdjust="spacingAndGlyphs">ПРОЕКТ</text>
<text x="2892.4" y="1889.2" font-size="25" fill="#77767c" textLength="65.0" lengthAdjust="spacingAndGlyphs">СОФТ</text>
<path d="M2855,1880 Q2861,1869 2870,1872 Q2877,1875 2883,1883 Q2886,1887 2890,1888.5" fill="none" stroke="#1f7fcf" stroke-width="5"/><path d="M2866,1867.5 Q2873,1863 2879,1868 Q2883,1872 2888,1877" fill="none" stroke="#1f7fcf" stroke-width="3.2"/><path d="M2878,1861 Q2889,1866 2888.5,1874" fill="none" stroke="#5aa8e2" stroke-width="1.1"/><path d="M2854.5,1879 Q2855,1893 2871,1902.5" fill="none" stroke="#5aa8e2" stroke-width="1.1"/>
</g>
<rect x="1.5" y="1.5" width="2979" height="1921" rx="16" fill="none" stroke="#c0bec3" stroke-width="3"/>
<rect x="0" y="70" width="3" height="2.5" fill="#333"/>
</svg>
<canvas id="cv1" width="750" height="500" style="position:absolute;left:1702px;top:416px;width:750px;height:500px"></canvas>
<canvas id="cv2" width="750" height="500" style="position:absolute;left:1702px;top:1254.5px;width:750px;height:500px"></canvas>
<script>(function(){
function draw(id, which){
  var c=document.getElementById(id); if(!c||!c.getContext) return;
  var W=750,H=500; var ctx=c.getContext('2d'); if(!ctx) return;
  var img=ctx.createImageData(W,H), d=img.data;
  var a=6,b=4,nu=0.15,q=10,E=35000e3,t=0.1,N=5;
  var D=E*t*t*t/(12*(1-nu*nu));
  var cw=16*q/(Math.pow(Math.PI,6)*D)*1000, cm=16*q/Math.pow(Math.PI,4);
  var COL=[[0,16,255],[0,112,255],[0,176,255],[0,229,255],[0,219,176],[0,204,68],[85,221,0],[179,224,0],[242,230,0],[255,204,0],[255,128,0],[255,26,0]];
  var SX=[],CX=[],SY=[],CY=[],i,j,m,n;
  for(m=0;m<N;m++){var mm=2*m+1,sx=new Float64Array(W),cx=new Float64Array(W);
    for(i=0;i<W;i++){var x=(i+0.5)/125;sx[i]=Math.sin(mm*Math.PI*x/a);cx[i]=Math.cos(mm*Math.PI*x/a)*mm*Math.PI/a;}
    SX.push(sx);CX.push(cx);}
  for(n=0;n<N;n++){var nn=2*n+1,sy=new Float64Array(H),cy=new Float64Array(H);
    for(j=0;j<H;j++){var y=4-(j+0.5)/125;sy[j]=Math.sin(nn*Math.PI*y/b);cy[j]=Math.cos(nn*Math.PI*y/b)*nn*Math.PI/b;}
    SY.push(sy);CY.push(cy);}
  var coef=[];
  for(m=0;m<N;m++){coef.push([]);for(n=0;n<N;n++){var M=2*m+1,Nn=2*n+1,A=M*M/a/a+Nn*Nn/b/b;
    var cc = which==1 ? -cw/(M*Nn*A*A)/6.63 : cm*(M*M/a/a+nu*Nn*Nn/b/b)/(M*Nn*A*A)/6.23;
    coef[m].push(cc);}}
  var K=140, ph=45*Math.PI/180, ka=0.3, kd=0.81, ks=0.5, p=170;
  var Lx=0,Ly=-Math.cos(ph),Lz=Math.sin(ph);
  var Hx=0,Hy=Ly,Hz=Lz+1,hl=Math.sqrt(Hy*Hy+Hz*Hz);Hy/=hl;Hz/=hl;
  for(j=0;j<H;j++){
    for(i=0;i<W;i++){
      var s=0,sxd=0,syd=0;
      for(m=0;m<N;m++){var sxm=SX[m][i],cxm=CX[m][i],cr=coef[m];
        for(n=0;n<N;n++){var k=cr[n];s+=k*sxm*SY[n][j];sxd+=k*cxm*SY[n][j];syd+=k*sxm*CY[n][j];}}
      var band = which==1 ? Math.floor((s+1)*12) : Math.floor(s*12);
      if(band<0)band=0; if(band>11)band=11;
      var hX=K*sxd/125, hY=-K*syd/125;
      var nl=Math.sqrt(hX*hX+hY*hY+1), ny=-hY/nl, nz=1/nl;
      var sp=ny*Hy+nz*Hz; if(sp<0)sp=0; sp=ks*Math.pow(sp,p);
      var hXd=0.45*hX, nl2=Math.sqrt(hXd*hXd+hY*hY+1);
      var df=(-hY*Ly+Lz)/nl2; if(df<0)df=0;
      var f=ka+kd*df; if(f>1)f=1;
      var g=1;
      var gx=(i+0.5)%62.5, gy=(j+0.5)%62.5;
      if(gx<1.3||gx>61.7||gy<1.3||gy>61.7) g=0.875;
      var col=COL[band], o=(j*W+i)*4;
      var r=(col[0]*f+255*sp)*g, gg=(col[1]*f+255*sp)*g, bb=(col[2]*f+255*sp)*g;
      d[o]=r>255?255:r; d[o+1]=gg>255?255:gg; d[o+2]=bb>255?255:bb; d[o+3]=255;
    }
  }
  ctx.putImageData(img,0,0);
  ctx.fillStyle='rgba(0,0,0,0.55)'; ctx.fillRect(0,0,W,1.2); ctx.fillRect(W-1.2,0,1.2,H);
  ctx.fillStyle='#000'; ctx.fillRect(0,0,2.6,H); ctx.fillRect(0,H-1.5,W,1.5);
}
draw('cv1',1); draw('cv2',2);
})();
</script>
</body></html>
